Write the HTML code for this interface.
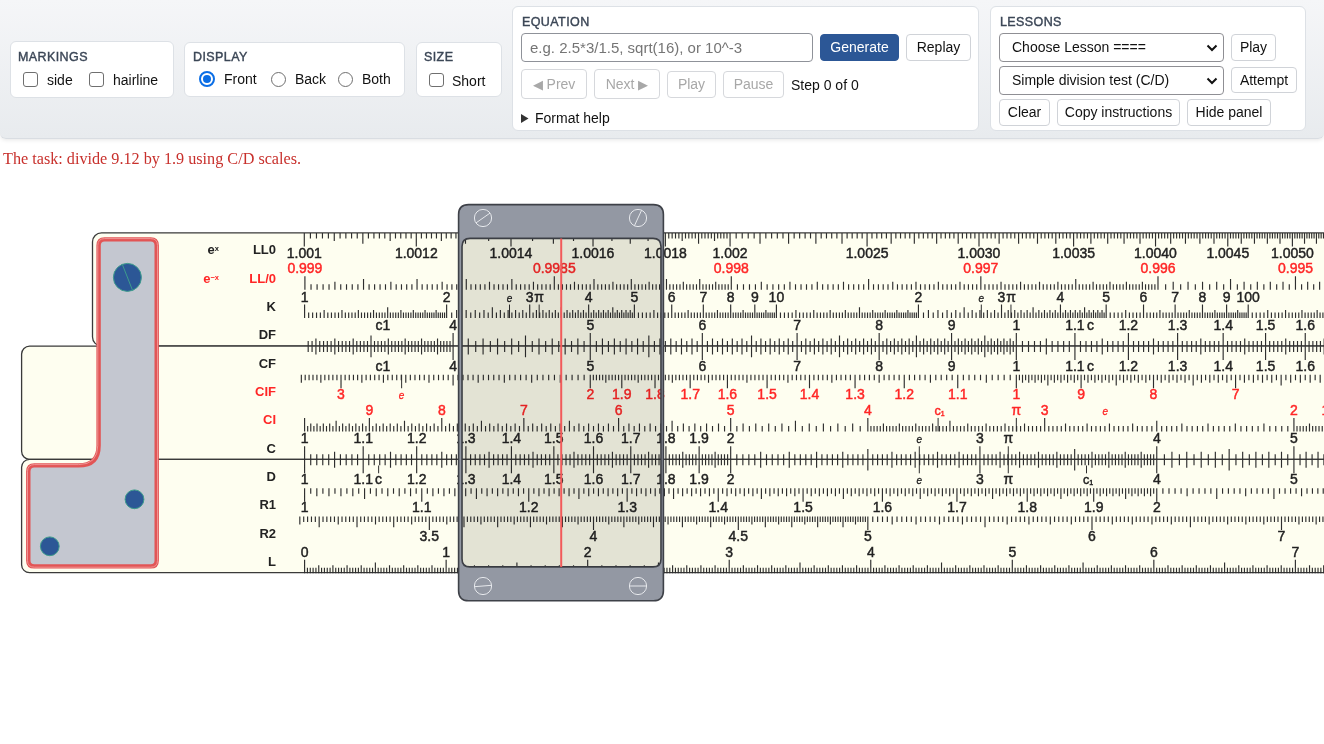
<!DOCTYPE html>
<html><head><meta charset="utf-8"><style>
html,body{margin:0;padding:0;width:1324px;height:744px;overflow:hidden;background:#fff;font-family:"Liberation Sans",sans-serif;}
</style></head><body>
<style>
#panel{position:absolute;left:0;top:0;width:1324px;height:138px;background:linear-gradient(180deg,#f5f6f8 0%,#e8ebee 100%);border-bottom:1px solid #d9dde2;box-shadow:0 1px 4px rgba(0,0,0,0.10);border-radius:0 0 6px 6px}
.box{position:absolute;background:#fff;border:1px solid #dde1e6;border-radius:6px;box-sizing:border-box}
.lab{position:absolute;font-size:12.5px;color:#3b4656;letter-spacing:0.4px;white-space:nowrap;-webkit-text-stroke:0.4px #3b4656}
.txt{position:absolute;font-size:14px;color:#111;white-space:nowrap}
.cb{position:absolute;width:14.5px;height:14.5px;border:1.4px solid #6f6f6f;border-radius:3px;box-sizing:border-box;background:#fff}
.rd{position:absolute;width:15px;height:15px;border:1.4px solid #6f6f6f;border-radius:50%;box-sizing:border-box;background:#fff}
.btn{position:absolute;box-sizing:border-box;border:1px solid #d0d3d8;border-radius:4px;background:#fff;font-size:14px;color:#111;text-align:center;white-space:nowrap}
.dis{color:#a8a8a8;border-color:#d6d8dc}
.sel{position:absolute;box-sizing:border-box;border:1px solid #8f8f94;border-radius:4px;background:#fff;font-size:14px;color:#111;white-space:nowrap}
</style>
<div id="panel">
  <div class="box" style="left:9.5px;top:41px;width:164px;height:57px"></div>
  <div class="lab" style="left:18px;top:50px">MARKINGS</div>
  <div class="cb" style="left:23.2px;top:72px"></div>
  <div class="txt" style="left:47px;top:72px">side</div>
  <div class="cb" style="left:89.3px;top:72px"></div>
  <div class="txt" style="left:113px;top:72px">hairline</div>

  <div class="box" style="left:184px;top:42px;width:221px;height:55px"></div>
  <div class="lab" style="left:193px;top:50px">DISPLAY</div>
  <div class="rd" style="left:198.5px;top:70.8px;width:16.5px;height:16.5px;border:2px solid #0b6ee6"><div style="position:absolute;left:2.25px;top:2.25px;width:8px;height:8px;border-radius:50%;background:#0b6ee6"></div></div>
  <div class="txt" style="left:224px;top:71px">Front</div>
  <div class="rd" style="left:271px;top:71.5px"></div>
  <div class="txt" style="left:295px;top:71px">Back</div>
  <div class="rd" style="left:337.8px;top:71.5px"></div>
  <div class="txt" style="left:362px;top:71px">Both</div>

  <div class="box" style="left:416px;top:42px;width:86px;height:55px"></div>
  <div class="lab" style="left:424px;top:50px">SIZE</div>
  <div class="cb" style="left:429.2px;top:72.5px"></div>
  <div class="txt" style="left:452px;top:73px">Short</div>

  <div class="box" style="left:512px;top:6px;width:467px;height:125px"></div>
  <div class="lab" style="left:522px;top:15px">EQUATION</div>
  <div class="sel" style="left:521px;top:33px;width:292px;height:29px;border-color:#8f9299"><span style="position:absolute;left:8px;top:4.5px;color:#757575;font-size:15px">e.g. 2.5*3/1.5, sqrt(16), or 10^-3</span></div>
  <div class="btn" style="left:820px;top:34px;width:79px;height:27px;background:#2c5796;border-color:#2c5796;color:#fff;line-height:25px">Generate</div>
  <div class="btn" style="left:906px;top:34px;width:65px;height:27px;line-height:25px">Replay</div>
  <div class="btn dis" style="left:521px;top:69px;width:66px;height:30px;line-height:28px"><span style="font-size:13px">&#9664;</span> Prev</div>
  <div class="btn dis" style="left:594px;top:69px;width:66px;height:30px;line-height:28px">Next <span style="font-size:13px">&#9654;</span></div>
  <div class="btn dis" style="left:667px;top:71px;width:49px;height:27px;line-height:25px">Play</div>
  <div class="btn dis" style="left:723px;top:71px;width:61px;height:27px;line-height:25px">Pause</div>
  <div class="txt" style="left:791px;top:77px">Step 0 of 0</div>
  <svg style="position:absolute;left:521px;top:114px" width="8" height="9"><path d="M0 0 L7.5 4.5 L0 9 Z" fill="#333"/></svg>
  <div class="txt" style="left:535px;top:110px">Format help</div>

  <div class="box" style="left:990px;top:6px;width:316px;height:125px"></div>
  <div class="lab" style="left:1000px;top:15px">LESSONS</div>
  <div class="sel" style="left:999px;top:33px;width:225px;height:29px"><span style="position:absolute;left:12px;top:5px">Choose Lesson ====</span><svg style="position:absolute;right:5px;top:10px" width="12" height="8"><path d="M1.5 1.5 L6 6 L10.5 1.5" stroke="#111" stroke-width="2" fill="none"/></svg></div>
  <div class="btn" style="left:1231px;top:34px;width:45px;height:27px;line-height:25px">Play</div>
  <div class="sel" style="left:999px;top:66px;width:225px;height:29px"><span style="position:absolute;left:12px;top:5px">Simple division test (C/D)</span><svg style="position:absolute;right:5px;top:10px" width="12" height="8"><path d="M1.5 1.5 L6 6 L10.5 1.5" stroke="#111" stroke-width="2" fill="none"/></svg></div>
  <div class="btn" style="left:1231px;top:67px;width:66px;height:26px;line-height:24px">Attempt</div>
  <div class="btn" style="left:999px;top:99px;width:51px;height:27px;line-height:25px">Clear</div>
  <div class="btn" style="left:1057px;top:99px;width:123px;height:27px;line-height:25px">Copy instructions</div>
  <div class="btn" style="left:1187px;top:99px;width:84px;height:27px;line-height:25px">Hide panel</div>
</div>

<div style="position:absolute;left:3px;top:150px;font-family:'Liberation Serif',serif;font-size:16.2px;color:#c8302c;white-space:nowrap">The task: divide 9.12 by 1.9 using C/D scales.</div>
<svg width="1324" height="744" viewBox="0 0 1324 744" style="position:absolute;left:0;top:0">
<rect x="92.5" y="232.8" width="1300" height="113.2" rx="9" fill="#fefef0" stroke="#3a3a3a" stroke-width="1.3"/>
<rect x="21.6" y="346.1" width="1400" height="113.2" rx="8" fill="#fefef0" stroke="#3a3a3a" stroke-width="1.3"/>
<rect x="21.6" y="459.3" width="1400" height="113.4" rx="8" fill="#fefef0" stroke="#3a3a3a" stroke-width="1.3"/>
<path d="M304.29 233.00v13.50M416.30 233.00v13.50M511.00 233.00v13.50M593.02 233.00v13.50M665.36 233.00v13.50M730.06 233.00v13.50M362.85 233.00v10.80M465.48 233.00v10.80M553.38 233.00v10.80M630.26 233.00v10.80M698.56 233.00v10.80M334.27 233.00v8.00M390.16 233.00v8.00M441.38 233.00v8.00M488.66 233.00v8.00M532.55 233.00v8.00M573.52 233.00v8.00M611.92 233.00v8.00M648.06 233.00v8.00M682.19 233.00v8.00M714.52 233.00v8.00M310.41 233.00v5.50M316.46 233.00v5.50M322.45 233.00v5.50M328.39 233.00v5.50M340.09 233.00v5.50M345.86 233.00v5.50M351.58 233.00v5.50M357.24 233.00v5.50M368.41 233.00v5.50M373.92 233.00v5.50M379.38 233.00v5.50M384.79 233.00v5.50M395.48 233.00v5.50M400.75 233.00v5.50M405.98 233.00v5.50M411.16 233.00v5.50M421.40 233.00v5.50M426.46 233.00v5.50M431.47 233.00v5.50M436.45 233.00v5.50M446.28 233.00v5.50M451.13 233.00v5.50M455.95 233.00v5.50M460.73 233.00v5.50M470.18 233.00v5.50M474.85 233.00v5.50M479.49 233.00v5.50M484.09 233.00v5.50M493.19 233.00v5.50M497.69 233.00v5.50M502.16 233.00v5.50M506.60 233.00v5.50M515.37 233.00v5.50M519.71 233.00v5.50M524.02 233.00v5.50M528.30 233.00v5.50M536.78 233.00v5.50M540.97 233.00v5.50M545.13 233.00v5.50M549.27 233.00v5.50M557.46 233.00v5.50M561.51 233.00v5.50M565.54 233.00v5.50M569.54 233.00v5.50M577.47 233.00v5.50M581.39 233.00v5.50M585.29 233.00v5.50M589.17 233.00v5.50M596.85 233.00v5.50M600.65 233.00v5.50M604.43 233.00v5.50M608.19 233.00v5.50M615.63 233.00v5.50M619.32 233.00v5.50M622.99 233.00v5.50M626.63 233.00v5.50M633.86 233.00v5.50M637.44 233.00v5.50M641.00 233.00v5.50M644.54 233.00v5.50M651.56 233.00v5.50M655.04 233.00v5.50M658.50 233.00v5.50M661.94 233.00v5.50M668.76 233.00v5.50M672.15 233.00v5.50M675.51 233.00v5.50M678.86 233.00v5.50M685.50 233.00v5.50M688.79 233.00v5.50M692.07 233.00v5.50M695.32 233.00v5.50M701.79 233.00v5.50M704.99 233.00v5.50M708.19 233.00v5.50M711.36 233.00v5.50M717.66 233.00v5.50M720.78 233.00v5.50M723.89 233.00v5.50M726.99 233.00v5.50M867.08 233.00v13.50M979.00 233.00v13.50M760.02 233.00v10.80M788.59 233.00v10.80M815.88 233.00v10.80M842.01 233.00v10.80M891.16 233.00v10.80M914.32 233.00v10.80M936.65 233.00v10.80M958.19 233.00v10.80M736.17 233.00v5.50M742.22 233.00v5.50M748.22 233.00v5.50M754.15 233.00v5.50M765.84 233.00v5.50M771.61 233.00v5.50M777.32 233.00v5.50M782.98 233.00v5.50M794.15 233.00v5.50M799.65 233.00v5.50M805.11 233.00v5.50M810.52 233.00v5.50M821.20 233.00v5.50M826.47 233.00v5.50M831.70 233.00v5.50M836.88 233.00v5.50M847.11 233.00v5.50M852.16 233.00v5.50M857.17 233.00v5.50M862.15 233.00v5.50M871.97 233.00v5.50M876.82 233.00v5.50M881.64 233.00v5.50M886.41 233.00v5.50M895.86 233.00v5.50M900.53 233.00v5.50M905.16 233.00v5.50M909.76 233.00v5.50M918.85 233.00v5.50M923.35 233.00v5.50M927.82 233.00v5.50M932.25 233.00v5.50M941.02 233.00v5.50M945.35 233.00v5.50M949.66 233.00v5.50M953.94 233.00v5.50M962.41 233.00v5.50M966.60 233.00v5.50M970.76 233.00v5.50M974.89 233.00v5.50M1073.60 233.00v13.50M1155.53 233.00v13.50M1227.78 233.00v13.50M1292.39 233.00v13.50M999.12 233.00v10.80M1018.61 233.00v10.80M1037.49 233.00v10.80M1055.81 233.00v10.80M1090.89 233.00v10.80M1107.70 233.00v10.80M1124.06 233.00v10.80M1140.00 233.00v10.80M1170.68 233.00v10.80M1185.46 233.00v10.80M1199.89 233.00v10.80M1213.99 233.00v10.80M1241.26 233.00v10.80M1254.45 233.00v10.80M1267.36 233.00v10.80M1280.00 233.00v10.80M1304.53 233.00v10.80M1316.44 233.00v10.80M1328.11 233.00v10.80M983.07 233.00v5.50M987.13 233.00v5.50M991.15 233.00v5.50M995.15 233.00v5.50M1003.07 233.00v5.50M1006.99 233.00v5.50M1010.89 233.00v5.50M1014.76 233.00v5.50M1022.43 233.00v5.50M1026.23 233.00v5.50M1030.01 233.00v5.50M1033.76 233.00v5.50M1041.20 233.00v5.50M1044.89 233.00v5.50M1048.55 233.00v5.50M1052.19 233.00v5.50M1059.41 233.00v5.50M1062.99 233.00v5.50M1066.55 233.00v5.50M1070.08 233.00v5.50M1077.10 233.00v5.50M1080.57 233.00v5.50M1084.03 233.00v5.50M1087.47 233.00v5.50M1094.29 233.00v5.50M1097.67 233.00v5.50M1101.03 233.00v5.50M1104.37 233.00v5.50M1111.00 233.00v5.50M1114.29 233.00v5.50M1117.57 233.00v5.50M1120.82 233.00v5.50M1127.28 233.00v5.50M1130.48 233.00v5.50M1133.67 233.00v5.50M1136.84 233.00v5.50M1143.13 233.00v5.50M1146.26 233.00v5.50M1149.36 233.00v5.50M1152.45 233.00v5.50M1158.59 233.00v5.50M1161.63 233.00v5.50M1164.66 233.00v5.50M1167.68 233.00v5.50M1173.66 233.00v5.50M1176.63 233.00v5.50M1179.59 233.00v5.50M1182.53 233.00v5.50M1188.37 233.00v5.50M1191.27 233.00v5.50M1194.16 233.00v5.50M1197.03 233.00v5.50M1202.74 233.00v5.50M1205.57 233.00v5.50M1208.39 233.00v5.50M1211.20 233.00v5.50M1216.77 233.00v5.50M1219.54 233.00v5.50M1222.30 233.00v5.50M1225.04 233.00v5.50M1230.50 233.00v5.50M1233.20 233.00v5.50M1235.90 233.00v5.50M1238.58 233.00v5.50M1243.92 233.00v5.50M1246.57 233.00v5.50M1249.20 233.00v5.50M1251.83 233.00v5.50M1257.05 233.00v5.50M1259.64 233.00v5.50M1262.22 233.00v5.50M1264.80 233.00v5.50M1269.91 233.00v5.50M1272.45 233.00v5.50M1274.97 233.00v5.50M1277.49 233.00v5.50M1282.50 233.00v5.50M1284.99 233.00v5.50M1287.46 233.00v5.50M1289.93 233.00v5.50M1294.84 233.00v5.50M1297.27 233.00v5.50M1299.70 233.00v5.50M1302.12 233.00v5.50M1306.93 233.00v5.50M1309.32 233.00v5.50M1311.70 233.00v5.50M1314.07 233.00v5.50M1318.79 233.00v5.50M1321.13 233.00v5.50M1323.47 233.00v5.50M1325.80 233.00v5.50" stroke="#2e2e2e" stroke-width="1.15" fill="none"/>
<path d="M731.29 289.70v-13.50M554.30 289.70v-13.50M304.91 289.70v-13.50M699.73 289.70v-10.80M666.47 289.70v-10.80M631.30 289.70v-10.80M594.00 289.70v-10.80M511.86 289.70v-10.80M466.28 289.70v-10.80M417.04 289.70v-10.80M363.53 289.70v-10.80M715.71 289.70v-8.00M683.32 289.70v-8.00M649.13 289.70v-8.00M612.93 289.70v-8.00M574.47 289.70v-8.00M533.45 289.70v-8.00M489.49 289.70v-8.00M442.15 289.70v-8.00M390.87 289.70v-8.00M334.91 289.70v-8.00M728.21 289.70v-5.50M725.11 289.70v-5.50M721.99 289.70v-5.50M718.86 289.70v-5.50M712.55 289.70v-5.50M709.37 289.70v-5.50M706.18 289.70v-5.50M702.96 289.70v-5.50M696.49 289.70v-5.50M693.22 289.70v-5.50M689.94 289.70v-5.50M686.64 289.70v-5.50M679.99 289.70v-5.50M676.64 289.70v-5.50M673.26 289.70v-5.50M669.87 289.70v-5.50M663.04 289.70v-5.50M659.59 289.70v-5.50M656.13 289.70v-5.50M652.64 289.70v-5.50M645.61 289.70v-5.50M642.06 289.70v-5.50M638.50 289.70v-5.50M634.91 289.70v-5.50M627.67 289.70v-5.50M624.02 289.70v-5.50M620.35 289.70v-5.50M616.65 289.70v-5.50M609.19 289.70v-5.50M605.43 289.70v-5.50M601.65 289.70v-5.50M597.84 289.70v-5.50M590.15 289.70v-5.50M586.27 289.70v-5.50M582.36 289.70v-5.50M578.43 289.70v-5.50M570.49 289.70v-5.50M566.48 289.70v-5.50M562.45 289.70v-5.50M558.39 289.70v-5.50M550.19 289.70v-5.50M546.04 289.70v-5.50M541.87 289.70v-5.50M537.67 289.70v-5.50M529.19 289.70v-5.50M524.90 289.70v-5.50M520.59 289.70v-5.50M516.24 289.70v-5.50M507.45 289.70v-5.50M503.01 289.70v-5.50M498.54 289.70v-5.50M494.03 289.70v-5.50M484.92 289.70v-5.50M480.31 289.70v-5.50M475.67 289.70v-5.50M470.99 289.70v-5.50M461.53 289.70v-5.50M456.74 289.70v-5.50M451.91 289.70v-5.50M447.05 289.70v-5.50M437.21 289.70v-5.50M432.23 289.70v-5.50M427.21 289.70v-5.50M422.15 289.70v-5.50M411.90 289.70v-5.50M406.70 289.70v-5.50M401.47 289.70v-5.50M396.19 289.70v-5.50M385.49 289.70v-5.50M380.07 289.70v-5.50M374.61 289.70v-5.50M369.09 289.70v-5.50M357.91 289.70v-5.50M352.24 289.70v-5.50M346.52 289.70v-5.50M340.74 289.70v-5.50M329.03 289.70v-5.50M323.09 289.70v-5.50M317.09 289.70v-5.50M311.03 289.70v-5.50M1157.99 289.70v-13.50M980.84 289.70v-13.50M1075.75 289.70v-10.80M868.61 289.70v-10.80M1142.39 289.70v-8.00M1126.40 289.70v-8.00M1109.97 289.70v-8.00M1093.10 289.70v-8.00M1057.90 289.70v-8.00M1039.52 289.70v-8.00M1020.57 289.70v-8.00M1001.03 289.70v-8.00M959.97 289.70v-8.00M938.37 289.70v-8.00M915.98 289.70v-8.00M892.75 289.70v-8.00M843.49 289.70v-8.00M817.30 289.70v-8.00M789.94 289.70v-8.00M761.32 289.70v-8.00M1154.90 289.70v-5.50M1151.80 289.70v-5.50M1148.68 289.70v-5.50M1145.54 289.70v-5.50M1139.23 289.70v-5.50M1136.04 289.70v-5.50M1132.84 289.70v-5.50M1129.63 289.70v-5.50M1123.15 289.70v-5.50M1119.88 289.70v-5.50M1116.59 289.70v-5.50M1113.29 289.70v-5.50M1106.63 289.70v-5.50M1103.28 289.70v-5.50M1099.90 289.70v-5.50M1096.51 289.70v-5.50M1089.67 289.70v-5.50M1086.22 289.70v-5.50M1082.75 289.70v-5.50M1079.26 289.70v-5.50M1072.22 289.70v-5.50M1068.67 289.70v-5.50M1065.10 289.70v-5.50M1061.51 289.70v-5.50M1054.27 289.70v-5.50M1050.61 289.70v-5.50M1046.94 289.70v-5.50M1043.24 289.70v-5.50M1035.78 289.70v-5.50M1032.01 289.70v-5.50M1028.22 289.70v-5.50M1024.41 289.70v-5.50M1016.71 289.70v-5.50M1012.83 289.70v-5.50M1008.92 289.70v-5.50M1004.99 289.70v-5.50M997.04 289.70v-5.50M993.03 289.70v-5.50M988.99 289.70v-5.50M984.93 289.70v-5.50M976.72 289.70v-5.50M972.58 289.70v-5.50M968.40 289.70v-5.50M964.20 289.70v-5.50M955.71 289.70v-5.50M951.42 289.70v-5.50M947.10 289.70v-5.50M942.75 289.70v-5.50M933.96 289.70v-5.50M929.51 289.70v-5.50M925.04 289.70v-5.50M920.53 289.70v-5.50M911.41 289.70v-5.50M906.80 289.70v-5.50M902.15 289.70v-5.50M897.47 289.70v-5.50M888.00 289.70v-5.50M883.21 289.70v-5.50M878.38 289.70v-5.50M873.52 289.70v-5.50M863.67 289.70v-5.50M858.69 289.70v-5.50M853.66 289.70v-5.50M848.60 289.70v-5.50M838.34 289.70v-5.50M833.15 289.70v-5.50M827.91 289.70v-5.50M822.63 289.70v-5.50M811.92 289.70v-5.50M806.50 289.70v-5.50M801.03 289.70v-5.50M795.51 289.70v-5.50M784.32 289.70v-5.50M778.65 289.70v-5.50M772.93 289.70v-5.50M767.15 289.70v-5.50M755.43 289.70v-5.50M749.48 289.70v-5.50M743.48 289.70v-5.50M737.42 289.70v-5.50M1295.46 289.70v-13.50M1230.54 289.70v-10.80M1319.63 289.70v-8.00M1307.67 289.70v-8.00M1283.01 289.70v-8.00M1270.31 289.70v-8.00M1257.33 289.70v-8.00M1244.08 289.70v-8.00M1216.70 289.70v-8.00M1202.54 289.70v-8.00M1188.04 289.70v-8.00M1173.20 289.70v-8.00M1325.53 289.70v-5.50M1313.68 289.70v-5.50M1301.59 289.70v-5.50M1289.27 289.70v-5.50M1276.69 289.70v-5.50M1263.85 289.70v-5.50M1250.74 289.70v-5.50M1237.35 289.70v-5.50M1223.66 289.70v-5.50M1209.66 289.70v-5.50M1195.33 289.70v-5.50M1180.66 289.70v-5.50M1165.64 289.70v-5.50" stroke="#2e2e2e" stroke-width="1.15" fill="none"/>
<path d="M304.60 318.05v-13.50M446.63 318.05v-13.50M387.68 318.05v-10.80M324.13 318.05v-8.00M341.96 318.05v-8.00M358.36 318.05v-8.00M373.54 318.05v-8.00M400.90 318.05v-8.00M413.33 318.05v-8.00M425.04 318.05v-8.00M436.12 318.05v-8.00M308.66 318.05v-5.50M312.64 318.05v-5.50M316.54 318.05v-5.50M320.37 318.05v-5.50M327.82 318.05v-5.50M331.45 318.05v-5.50M335.01 318.05v-5.50M338.51 318.05v-5.50M345.34 318.05v-5.50M348.68 318.05v-5.50M351.95 318.05v-5.50M355.18 318.05v-5.50M361.49 318.05v-5.50M364.57 318.05v-5.50M367.60 318.05v-5.50M370.59 318.05v-5.50M376.45 318.05v-5.50M379.32 318.05v-5.50M382.14 318.05v-5.50M384.93 318.05v-5.50M390.39 318.05v-5.50M393.07 318.05v-5.50M395.72 318.05v-5.50M398.33 318.05v-5.50M403.45 318.05v-5.50M405.96 318.05v-5.50M408.45 318.05v-5.50M410.90 318.05v-5.50M415.72 318.05v-5.50M418.09 318.05v-5.50M420.43 318.05v-5.50M422.75 318.05v-5.50M427.30 318.05v-5.50M429.54 318.05v-5.50M431.76 318.05v-5.50M433.95 318.05v-5.50M438.26 318.05v-5.50M440.38 318.05v-5.50M442.49 318.05v-5.50M444.57 318.05v-5.50M529.71 318.05v-13.50M588.65 318.05v-13.50M634.37 318.05v-13.50M492.35 318.05v-10.80M561.29 318.05v-10.80M612.79 318.05v-10.80M456.62 318.05v-8.00M466.16 318.05v-8.00M475.26 318.05v-8.00M483.98 318.05v-8.00M500.38 318.05v-8.00M508.12 318.05v-8.00M515.57 318.05v-8.00M522.76 318.05v-8.00M536.42 318.05v-8.00M542.93 318.05v-8.00M549.23 318.05v-8.00M555.35 318.05v-8.00M567.06 318.05v-8.00M572.68 318.05v-8.00M578.14 318.05v-8.00M583.46 318.05v-8.00M593.71 318.05v-8.00M598.65 318.05v-8.00M603.47 318.05v-8.00M608.18 318.05v-8.00M617.29 318.05v-8.00M621.70 318.05v-8.00M626.01 318.05v-8.00M630.23 318.05v-8.00M451.69 318.05v-5.50M461.44 318.05v-5.50M470.76 318.05v-5.50M479.67 318.05v-5.50M488.21 318.05v-5.50M496.41 318.05v-5.50M504.29 318.05v-5.50M511.88 318.05v-5.50M519.20 318.05v-5.50M526.26 318.05v-5.50M533.09 318.05v-5.50M539.70 318.05v-5.50M546.11 318.05v-5.50M552.32 318.05v-5.50M558.34 318.05v-5.50M564.20 318.05v-5.50M569.89 318.05v-5.50M575.43 318.05v-5.50M580.82 318.05v-5.50M586.07 318.05v-5.50M591.20 318.05v-5.50M596.20 318.05v-5.50M601.07 318.05v-5.50M605.84 318.05v-5.50M610.50 318.05v-5.50M615.05 318.05v-5.50M619.50 318.05v-5.50M623.86 318.05v-5.50M628.13 318.05v-5.50M632.31 318.05v-5.50M671.73 318.05v-13.50M703.32 318.05v-13.50M730.68 318.05v-13.50M754.81 318.05v-13.50M776.40 318.05v-13.50M653.90 318.05v-8.00M688.13 318.05v-8.00M717.45 318.05v-8.00M743.10 318.05v-8.00M765.89 318.05v-8.00M638.43 318.05v-5.50M642.41 318.05v-5.50M646.31 318.05v-5.50M650.14 318.05v-5.50M657.60 318.05v-5.50M661.22 318.05v-5.50M664.79 318.05v-5.50M668.29 318.05v-5.50M675.12 318.05v-5.50M678.45 318.05v-5.50M681.73 318.05v-5.50M684.96 318.05v-5.50M691.26 318.05v-5.50M694.34 318.05v-5.50M697.38 318.05v-5.50M700.37 318.05v-5.50M706.22 318.05v-5.50M709.09 318.05v-5.50M711.92 318.05v-5.50M714.70 318.05v-5.50M720.17 318.05v-5.50M722.85 318.05v-5.50M725.49 318.05v-5.50M728.10 318.05v-5.50M733.22 318.05v-5.50M735.74 318.05v-5.50M738.22 318.05v-5.50M740.67 318.05v-5.50M745.50 318.05v-5.50M747.87 318.05v-5.50M750.21 318.05v-5.50M752.52 318.05v-5.50M757.08 318.05v-5.50M759.32 318.05v-5.50M761.53 318.05v-5.50M763.72 318.05v-5.50M768.04 318.05v-5.50M770.16 318.05v-5.50M772.26 318.05v-5.50M774.34 318.05v-5.50M918.43 318.05v-13.50M859.48 318.05v-10.80M795.93 318.05v-8.00M813.76 318.05v-8.00M830.16 318.05v-8.00M845.34 318.05v-8.00M872.70 318.05v-8.00M885.13 318.05v-8.00M896.84 318.05v-8.00M907.92 318.05v-8.00M780.46 318.05v-5.50M784.44 318.05v-5.50M788.34 318.05v-5.50M792.17 318.05v-5.50M799.62 318.05v-5.50M803.25 318.05v-5.50M806.81 318.05v-5.50M810.31 318.05v-5.50M817.14 318.05v-5.50M820.48 318.05v-5.50M823.75 318.05v-5.50M826.98 318.05v-5.50M833.29 318.05v-5.50M836.37 318.05v-5.50M839.40 318.05v-5.50M842.39 318.05v-5.50M848.25 318.05v-5.50M851.12 318.05v-5.50M853.94 318.05v-5.50M856.73 318.05v-5.50M862.19 318.05v-5.50M864.87 318.05v-5.50M867.52 318.05v-5.50M870.13 318.05v-5.50M875.25 318.05v-5.50M877.76 318.05v-5.50M880.25 318.05v-5.50M882.70 318.05v-5.50M887.52 318.05v-5.50M889.89 318.05v-5.50M892.23 318.05v-5.50M894.55 318.05v-5.50M899.10 318.05v-5.50M901.34 318.05v-5.50M903.56 318.05v-5.50M905.75 318.05v-5.50M910.06 318.05v-5.50M912.18 318.05v-5.50M914.29 318.05v-5.50M916.37 318.05v-5.50M1001.51 318.05v-13.50M1060.45 318.05v-13.50M1106.17 318.05v-13.50M964.15 318.05v-10.80M1033.09 318.05v-10.80M1084.59 318.05v-10.80M928.42 318.05v-8.00M937.96 318.05v-8.00M947.06 318.05v-8.00M955.78 318.05v-8.00M972.18 318.05v-8.00M979.92 318.05v-8.00M987.37 318.05v-8.00M994.56 318.05v-8.00M1008.22 318.05v-8.00M1014.73 318.05v-8.00M1021.03 318.05v-8.00M1027.15 318.05v-8.00M1038.86 318.05v-8.00M1044.48 318.05v-8.00M1049.94 318.05v-8.00M1055.26 318.05v-8.00M1065.51 318.05v-8.00M1070.45 318.05v-8.00M1075.27 318.05v-8.00M1079.98 318.05v-8.00M1089.09 318.05v-8.00M1093.50 318.05v-8.00M1097.81 318.05v-8.00M1102.03 318.05v-8.00M923.49 318.05v-5.50M933.24 318.05v-5.50M942.56 318.05v-5.50M951.47 318.05v-5.50M960.01 318.05v-5.50M968.21 318.05v-5.50M976.09 318.05v-5.50M983.68 318.05v-5.50M991.00 318.05v-5.50M998.06 318.05v-5.50M1004.89 318.05v-5.50M1011.50 318.05v-5.50M1017.91 318.05v-5.50M1024.12 318.05v-5.50M1030.14 318.05v-5.50M1036.00 318.05v-5.50M1041.69 318.05v-5.50M1047.23 318.05v-5.50M1052.62 318.05v-5.50M1057.87 318.05v-5.50M1063.00 318.05v-5.50M1068.00 318.05v-5.50M1072.87 318.05v-5.50M1077.64 318.05v-5.50M1082.30 318.05v-5.50M1086.85 318.05v-5.50M1091.30 318.05v-5.50M1095.66 318.05v-5.50M1099.93 318.05v-5.50M1104.11 318.05v-5.50M1143.53 318.05v-13.50M1175.12 318.05v-13.50M1202.48 318.05v-13.50M1226.61 318.05v-13.50M1248.20 318.05v-13.50M1125.70 318.05v-8.00M1159.93 318.05v-8.00M1189.25 318.05v-8.00M1214.90 318.05v-8.00M1237.69 318.05v-8.00M1110.23 318.05v-5.50M1114.21 318.05v-5.50M1118.11 318.05v-5.50M1121.94 318.05v-5.50M1129.40 318.05v-5.50M1133.02 318.05v-5.50M1136.59 318.05v-5.50M1140.09 318.05v-5.50M1146.92 318.05v-5.50M1150.25 318.05v-5.50M1153.53 318.05v-5.50M1156.76 318.05v-5.50M1163.06 318.05v-5.50M1166.14 318.05v-5.50M1169.18 318.05v-5.50M1172.17 318.05v-5.50M1178.02 318.05v-5.50M1180.89 318.05v-5.50M1183.72 318.05v-5.50M1186.50 318.05v-5.50M1191.97 318.05v-5.50M1194.65 318.05v-5.50M1197.29 318.05v-5.50M1199.90 318.05v-5.50M1205.02 318.05v-5.50M1207.54 318.05v-5.50M1210.02 318.05v-5.50M1212.47 318.05v-5.50M1217.30 318.05v-5.50M1219.67 318.05v-5.50M1222.01 318.05v-5.50M1224.32 318.05v-5.50M1228.88 318.05v-5.50M1231.12 318.05v-5.50M1233.33 318.05v-5.50M1235.52 318.05v-5.50M1239.84 318.05v-5.50M1241.96 318.05v-5.50M1244.06 318.05v-5.50M1246.14 318.05v-5.50M1267.73 318.05v-8.00M1285.56 318.05v-8.00M1301.96 318.05v-8.00M1317.14 318.05v-8.00M1252.26 318.05v-5.50M1256.24 318.05v-5.50M1260.14 318.05v-5.50M1263.97 318.05v-5.50M1271.42 318.05v-5.50M1275.05 318.05v-5.50M1278.61 318.05v-5.50M1282.11 318.05v-5.50M1288.94 318.05v-5.50M1292.28 318.05v-5.50M1295.55 318.05v-5.50M1298.78 318.05v-5.50M1305.09 318.05v-5.50M1308.17 318.05v-5.50M1311.20 318.05v-5.50M1314.19 318.05v-5.50M1320.05 318.05v-5.50M1322.92 318.05v-5.50M1325.74 318.05v-5.50M1328.53 318.05v-5.50" stroke="#2e2e2e" stroke-width="1.15" fill="none"/>
<path d="M453.09 346.40v-13.50M371.01 346.40v-10.80M315.92 346.40v-8.00M334.84 346.40v-8.00M353.19 346.40v-8.00M388.32 346.40v-8.00M405.17 346.40v-8.00M421.56 346.40v-8.00M437.53 346.40v-8.00M308.19 346.40v-5.50M312.07 346.40v-5.50M319.75 346.40v-5.50M323.56 346.40v-5.50M327.34 346.40v-5.50M331.10 346.40v-5.50M338.55 346.40v-5.50M342.24 346.40v-5.50M345.91 346.40v-5.50M349.56 346.40v-5.50M356.79 346.40v-5.50M360.38 346.40v-5.50M363.94 346.40v-5.50M367.49 346.40v-5.50M374.51 346.40v-5.50M377.99 346.40v-5.50M381.46 346.40v-5.50M384.90 346.40v-5.50M391.73 346.40v-5.50M395.12 346.40v-5.50M398.49 346.40v-5.50M401.84 346.40v-5.50M408.48 346.40v-5.50M411.78 346.40v-5.50M415.05 346.40v-5.50M418.32 346.40v-5.50M424.79 346.40v-5.50M428.00 346.40v-5.50M431.19 346.40v-5.50M434.37 346.40v-5.50M440.67 346.40v-5.50M443.80 346.40v-5.50M446.91 346.40v-5.50M450.01 346.40v-5.50M590.26 346.40v-13.50M702.33 346.40v-13.50M797.09 346.40v-13.50M879.17 346.40v-13.50M951.57 346.40v-13.50M1016.33 346.40v-13.50M525.49 346.40v-10.80M648.84 346.40v-10.80M751.53 346.40v-10.80M839.50 346.40v-10.80M916.43 346.40v-10.80M984.80 346.40v-10.80M468.27 346.40v-8.00M483.08 346.40v-8.00M497.55 346.40v-8.00M511.68 346.40v-8.00M539.00 346.40v-8.00M552.22 346.40v-8.00M565.16 346.40v-8.00M577.84 346.40v-8.00M602.43 346.40v-8.00M614.37 346.40v-8.00M626.07 346.40v-8.00M637.56 346.40v-8.00M659.92 346.40v-8.00M670.80 346.40v-8.00M681.49 346.40v-8.00M692.00 346.40v-8.00M712.49 346.40v-8.00M722.49 346.40v-8.00M732.32 346.40v-8.00M742.00 346.40v-8.00M760.92 346.40v-8.00M770.16 346.40v-8.00M779.27 346.40v-8.00M788.24 346.40v-8.00M805.81 346.40v-8.00M814.40 346.40v-8.00M822.88 346.40v-8.00M831.24 346.40v-8.00M847.64 346.40v-8.00M855.67 346.40v-8.00M863.60 346.40v-8.00M871.44 346.40v-8.00M886.80 346.40v-8.00M894.35 346.40v-8.00M901.80 346.40v-8.00M909.16 346.40v-8.00M923.62 346.40v-8.00M930.73 346.40v-8.00M937.75 346.40v-8.00M944.70 346.40v-8.00M958.36 346.40v-8.00M965.08 346.40v-8.00M971.72 346.40v-8.00M978.30 346.40v-8.00M991.24 346.40v-8.00M997.61 346.40v-8.00M1003.92 346.40v-8.00M1010.16 346.40v-8.00M460.73 346.40v-5.50M475.72 346.40v-5.50M490.36 346.40v-5.50M504.65 346.40v-5.50M518.62 346.40v-5.50M532.28 346.40v-5.50M545.65 346.40v-5.50M558.73 346.40v-5.50M571.53 346.40v-5.50M584.08 346.40v-5.50M596.37 346.40v-5.50M608.43 346.40v-5.50M620.25 346.40v-5.50M631.85 346.40v-5.50M643.23 346.40v-5.50M654.41 346.40v-5.50M665.38 346.40v-5.50M676.17 346.40v-5.50M686.77 346.40v-5.50M697.19 346.40v-5.50M707.43 346.40v-5.50M717.51 346.40v-5.50M727.42 346.40v-5.50M737.18 346.40v-5.50M746.78 346.40v-5.50M756.24 346.40v-5.50M765.56 346.40v-5.50M774.73 346.40v-5.50M783.77 346.40v-5.50M792.68 346.40v-5.50M801.46 346.40v-5.50M810.12 346.40v-5.50M818.66 346.40v-5.50M827.08 346.40v-5.50M835.38 346.40v-5.50M843.58 346.40v-5.50M851.67 346.40v-5.50M859.65 346.40v-5.50M867.53 346.40v-5.50M875.31 346.40v-5.50M883.00 346.40v-5.50M890.59 346.40v-5.50M898.08 346.40v-5.50M905.49 346.40v-5.50M912.81 346.40v-5.50M920.04 346.40v-5.50M927.19 346.40v-5.50M934.25 346.40v-5.50M941.24 346.40v-5.50M948.14 346.40v-5.50M954.97 346.40v-5.50M961.73 346.40v-5.50M968.41 346.40v-5.50M975.02 346.40v-5.50M981.56 346.40v-5.50M988.03 346.40v-5.50M994.43 346.40v-5.50M1000.77 346.40v-5.50M1007.04 346.40v-5.50M1013.25 346.40v-5.50M1016.33 346.40v-13.50M1074.92 346.40v-13.50M1128.41 346.40v-13.50M1177.61 346.40v-13.50M1223.16 346.40v-13.50M1265.57 346.40v-13.50M1305.25 346.40v-13.50M1046.33 346.40v-8.00M1102.25 346.40v-8.00M1153.50 346.40v-8.00M1200.81 346.40v-8.00M1244.73 346.40v-8.00M1285.73 346.40v-8.00M1324.16 346.40v-8.00M1022.45 346.40v-5.50M1028.51 346.40v-5.50M1034.50 346.40v-5.50M1040.44 346.40v-5.50M1052.15 346.40v-5.50M1057.92 346.40v-5.50M1063.64 346.40v-5.50M1069.31 346.40v-5.50M1080.48 346.40v-5.50M1086.00 346.40v-5.50M1091.46 346.40v-5.50M1096.88 346.40v-5.50M1107.57 346.40v-5.50M1112.84 346.40v-5.50M1118.08 346.40v-5.50M1123.26 346.40v-5.50M1133.51 346.40v-5.50M1138.57 346.40v-5.50M1143.59 346.40v-5.50M1148.56 346.40v-5.50M1158.40 346.40v-5.50M1163.26 346.40v-5.50M1168.08 346.40v-5.50M1172.86 346.40v-5.50M1182.32 346.40v-5.50M1186.99 346.40v-5.50M1191.63 346.40v-5.50M1196.24 346.40v-5.50M1205.35 346.40v-5.50M1209.85 346.40v-5.50M1214.32 346.40v-5.50M1218.76 346.40v-5.50M1227.54 346.40v-5.50M1231.88 346.40v-5.50M1236.20 346.40v-5.50M1240.48 346.40v-5.50M1248.96 346.40v-5.50M1253.16 346.40v-5.50M1257.32 346.40v-5.50M1261.46 346.40v-5.50M1269.66 346.40v-5.50M1273.72 346.40v-5.50M1277.75 346.40v-5.50M1281.75 346.40v-5.50M1289.68 346.40v-5.50M1293.61 346.40v-5.50M1297.51 346.40v-5.50M1301.39 346.40v-5.50M1309.08 346.40v-5.50M1312.88 346.40v-5.50M1316.66 346.40v-5.50M1320.42 346.40v-5.50M1327.88 346.40v-5.50" stroke="#2e2e2e" stroke-width="1.15" fill="none"/>
<path d="M453.09 346.40v13.50M371.01 346.40v10.80M315.92 346.40v8.00M334.84 346.40v8.00M353.19 346.40v8.00M388.32 346.40v8.00M405.17 346.40v8.00M421.56 346.40v8.00M437.53 346.40v8.00M308.19 346.40v5.50M312.07 346.40v5.50M319.75 346.40v5.50M323.56 346.40v5.50M327.34 346.40v5.50M331.10 346.40v5.50M338.55 346.40v5.50M342.24 346.40v5.50M345.91 346.40v5.50M349.56 346.40v5.50M356.79 346.40v5.50M360.38 346.40v5.50M363.94 346.40v5.50M367.49 346.40v5.50M374.51 346.40v5.50M377.99 346.40v5.50M381.46 346.40v5.50M384.90 346.40v5.50M391.73 346.40v5.50M395.12 346.40v5.50M398.49 346.40v5.50M401.84 346.40v5.50M408.48 346.40v5.50M411.78 346.40v5.50M415.05 346.40v5.50M418.32 346.40v5.50M424.79 346.40v5.50M428.00 346.40v5.50M431.19 346.40v5.50M434.37 346.40v5.50M440.67 346.40v5.50M443.80 346.40v5.50M446.91 346.40v5.50M450.01 346.40v5.50M590.26 346.40v13.50M702.33 346.40v13.50M797.09 346.40v13.50M879.17 346.40v13.50M951.57 346.40v13.50M1016.33 346.40v13.50M525.49 346.40v10.80M648.84 346.40v10.80M751.53 346.40v10.80M839.50 346.40v10.80M916.43 346.40v10.80M984.80 346.40v10.80M468.27 346.40v8.00M483.08 346.40v8.00M497.55 346.40v8.00M511.68 346.40v8.00M539.00 346.40v8.00M552.22 346.40v8.00M565.16 346.40v8.00M577.84 346.40v8.00M602.43 346.40v8.00M614.37 346.40v8.00M626.07 346.40v8.00M637.56 346.40v8.00M659.92 346.40v8.00M670.80 346.40v8.00M681.49 346.40v8.00M692.00 346.40v8.00M712.49 346.40v8.00M722.49 346.40v8.00M732.32 346.40v8.00M742.00 346.40v8.00M760.92 346.40v8.00M770.16 346.40v8.00M779.27 346.40v8.00M788.24 346.40v8.00M805.81 346.40v8.00M814.40 346.40v8.00M822.88 346.40v8.00M831.24 346.40v8.00M847.64 346.40v8.00M855.67 346.40v8.00M863.60 346.40v8.00M871.44 346.40v8.00M886.80 346.40v8.00M894.35 346.40v8.00M901.80 346.40v8.00M909.16 346.40v8.00M923.62 346.40v8.00M930.73 346.40v8.00M937.75 346.40v8.00M944.70 346.40v8.00M958.36 346.40v8.00M965.08 346.40v8.00M971.72 346.40v8.00M978.30 346.40v8.00M991.24 346.40v8.00M997.61 346.40v8.00M1003.92 346.40v8.00M1010.16 346.40v8.00M460.73 346.40v5.50M475.72 346.40v5.50M490.36 346.40v5.50M504.65 346.40v5.50M518.62 346.40v5.50M532.28 346.40v5.50M545.65 346.40v5.50M558.73 346.40v5.50M571.53 346.40v5.50M584.08 346.40v5.50M596.37 346.40v5.50M608.43 346.40v5.50M620.25 346.40v5.50M631.85 346.40v5.50M643.23 346.40v5.50M654.41 346.40v5.50M665.38 346.40v5.50M676.17 346.40v5.50M686.77 346.40v5.50M697.19 346.40v5.50M707.43 346.40v5.50M717.51 346.40v5.50M727.42 346.40v5.50M737.18 346.40v5.50M746.78 346.40v5.50M756.24 346.40v5.50M765.56 346.40v5.50M774.73 346.40v5.50M783.77 346.40v5.50M792.68 346.40v5.50M801.46 346.40v5.50M810.12 346.40v5.50M818.66 346.40v5.50M827.08 346.40v5.50M835.38 346.40v5.50M843.58 346.40v5.50M851.67 346.40v5.50M859.65 346.40v5.50M867.53 346.40v5.50M875.31 346.40v5.50M883.00 346.40v5.50M890.59 346.40v5.50M898.08 346.40v5.50M905.49 346.40v5.50M912.81 346.40v5.50M920.04 346.40v5.50M927.19 346.40v5.50M934.25 346.40v5.50M941.24 346.40v5.50M948.14 346.40v5.50M954.97 346.40v5.50M961.73 346.40v5.50M968.41 346.40v5.50M975.02 346.40v5.50M981.56 346.40v5.50M988.03 346.40v5.50M994.43 346.40v5.50M1000.77 346.40v5.50M1007.04 346.40v5.50M1013.25 346.40v5.50M1016.33 346.40v13.50M1074.92 346.40v13.50M1128.41 346.40v13.50M1177.61 346.40v13.50M1223.16 346.40v13.50M1265.57 346.40v13.50M1305.25 346.40v13.50M1046.33 346.40v8.00M1102.25 346.40v8.00M1153.50 346.40v8.00M1200.81 346.40v8.00M1244.73 346.40v8.00M1285.73 346.40v8.00M1324.16 346.40v8.00M1022.45 346.40v5.50M1028.51 346.40v5.50M1034.50 346.40v5.50M1040.44 346.40v5.50M1052.15 346.40v5.50M1057.92 346.40v5.50M1063.64 346.40v5.50M1069.31 346.40v5.50M1080.48 346.40v5.50M1086.00 346.40v5.50M1091.46 346.40v5.50M1096.88 346.40v5.50M1107.57 346.40v5.50M1112.84 346.40v5.50M1118.08 346.40v5.50M1123.26 346.40v5.50M1133.51 346.40v5.50M1138.57 346.40v5.50M1143.59 346.40v5.50M1148.56 346.40v5.50M1158.40 346.40v5.50M1163.26 346.40v5.50M1168.08 346.40v5.50M1172.86 346.40v5.50M1182.32 346.40v5.50M1186.99 346.40v5.50M1191.63 346.40v5.50M1196.24 346.40v5.50M1205.35 346.40v5.50M1209.85 346.40v5.50M1214.32 346.40v5.50M1218.76 346.40v5.50M1227.54 346.40v5.50M1231.88 346.40v5.50M1236.20 346.40v5.50M1240.48 346.40v5.50M1248.96 346.40v5.50M1253.16 346.40v5.50M1257.32 346.40v5.50M1261.46 346.40v5.50M1269.66 346.40v5.50M1273.72 346.40v5.50M1277.75 346.40v5.50M1281.75 346.40v5.50M1289.68 346.40v5.50M1293.61 346.40v5.50M1297.51 346.40v5.50M1301.39 346.40v5.50M1309.08 346.40v5.50M1312.88 346.40v5.50M1316.66 346.40v5.50M1320.42 346.40v5.50M1327.88 346.40v5.50" stroke="#2e2e2e" stroke-width="1.15" fill="none"/>
<path d="M1016.33 374.75v13.50M590.26 374.75v13.50M957.75 374.75v13.50M904.26 374.75v13.50M855.06 374.75v13.50M809.50 374.75v13.50M767.09 374.75v13.50M727.42 374.75v13.50M690.16 374.75v13.50M655.02 374.75v13.50M621.79 374.75v13.50M986.34 374.75v8.00M930.42 374.75v8.00M879.17 374.75v8.00M831.86 374.75v8.00M787.93 374.75v8.00M746.94 374.75v8.00M708.51 374.75v8.00M672.34 374.75v8.00M638.18 374.75v8.00M605.82 374.75v8.00M1010.22 374.75v5.50M1004.16 374.75v5.50M998.16 374.75v5.50M992.23 374.75v5.50M980.52 374.75v5.50M974.74 374.75v5.50M969.03 374.75v5.50M963.36 374.75v5.50M952.18 374.75v5.50M946.67 374.75v5.50M941.21 374.75v5.50M935.79 374.75v5.50M925.10 374.75v5.50M919.82 374.75v5.50M914.59 374.75v5.50M909.40 374.75v5.50M899.16 374.75v5.50M894.10 374.75v5.50M889.08 374.75v5.50M884.11 374.75v5.50M874.27 374.75v5.50M869.41 374.75v5.50M864.59 374.75v5.50M859.81 374.75v5.50M850.35 374.75v5.50M845.67 374.75v5.50M841.03 374.75v5.50M836.43 374.75v5.50M827.32 374.75v5.50M822.82 374.75v5.50M818.35 374.75v5.50M813.91 374.75v5.50M805.13 374.75v5.50M800.79 374.75v5.50M796.47 374.75v5.50M792.19 374.75v5.50M783.71 374.75v5.50M779.51 374.75v5.50M775.35 374.75v5.50M771.21 374.75v5.50M763.01 374.75v5.50M758.95 374.75v5.50M754.92 374.75v5.50M750.92 374.75v5.50M742.99 374.75v5.50M739.06 374.75v5.50M735.15 374.75v5.50M731.28 374.75v5.50M723.59 374.75v5.50M719.79 374.75v5.50M716.00 374.75v5.50M712.24 374.75v5.50M704.79 374.75v5.50M701.10 374.75v5.50M697.43 374.75v5.50M693.78 374.75v5.50M686.55 374.75v5.50M682.97 374.75v5.50M679.40 374.75v5.50M675.86 374.75v5.50M668.84 374.75v5.50M665.35 374.75v5.50M661.89 374.75v5.50M658.45 374.75v5.50M651.62 374.75v5.50M648.23 374.75v5.50M644.86 374.75v5.50M641.51 374.75v5.50M634.87 374.75v5.50M631.57 374.75v5.50M628.29 374.75v5.50M625.03 374.75v5.50M618.56 374.75v5.50M615.35 374.75v5.50M612.16 374.75v5.50M608.98 374.75v5.50M602.67 374.75v5.50M599.55 374.75v5.50M596.43 374.75v5.50M593.34 374.75v5.50M341.02 374.75v13.50M453.09 374.75v10.80M560.26 374.75v8.00M531.67 374.75v8.00M504.34 374.75v8.00M478.18 374.75v8.00M428.98 374.75v8.00M405.78 374.75v8.00M383.43 374.75v8.00M361.86 374.75v8.00M320.86 374.75v8.00M301.34 374.75v8.00M584.14 374.75v5.50M578.08 374.75v5.50M572.09 374.75v5.50M566.15 374.75v5.50M554.44 374.75v5.50M548.67 374.75v5.50M542.95 374.75v5.50M537.28 374.75v5.50M526.11 374.75v5.50M520.59 374.75v5.50M515.13 374.75v5.50M509.71 374.75v5.50M499.02 374.75v5.50M493.75 374.75v5.50M488.51 374.75v5.50M483.33 374.75v5.50M473.08 374.75v5.50M468.02 374.75v5.50M463.00 374.75v5.50M458.03 374.75v5.50M448.19 374.75v5.50M443.33 374.75v5.50M438.51 374.75v5.50M433.73 374.75v5.50M424.27 374.75v5.50M419.60 374.75v5.50M414.96 374.75v5.50M410.35 374.75v5.50M401.25 374.75v5.50M396.74 374.75v5.50M392.27 374.75v5.50M387.83 374.75v5.50M379.05 374.75v5.50M374.71 374.75v5.50M370.39 374.75v5.50M366.11 374.75v5.50M357.63 374.75v5.50M353.44 374.75v5.50M349.27 374.75v5.50M345.13 374.75v5.50M336.93 374.75v5.50M332.87 374.75v5.50M328.84 374.75v5.50M324.84 374.75v5.50M316.91 374.75v5.50M312.98 374.75v5.50M309.08 374.75v5.50M305.20 374.75v5.50M1235.58 374.75v13.50M1153.50 374.75v13.50M1081.10 374.75v13.50M1016.33 374.75v13.50M1281.14 374.75v10.80M1193.17 374.75v10.80M1116.23 374.75v10.80M1047.86 374.75v10.80M1320.18 374.75v8.00M1310.18 374.75v8.00M1300.35 374.75v8.00M1290.67 374.75v8.00M1271.75 374.75v8.00M1262.51 374.75v8.00M1253.40 374.75v8.00M1244.43 374.75v8.00M1226.86 374.75v8.00M1218.27 374.75v8.00M1209.79 374.75v8.00M1201.42 374.75v8.00M1185.03 374.75v8.00M1177.00 374.75v8.00M1169.06 374.75v8.00M1161.23 374.75v8.00M1145.86 374.75v8.00M1138.32 374.75v8.00M1130.87 374.75v8.00M1123.51 374.75v8.00M1109.04 374.75v8.00M1101.94 374.75v8.00M1094.91 374.75v8.00M1087.97 374.75v8.00M1074.31 374.75v8.00M1067.59 374.75v8.00M1060.94 374.75v8.00M1054.37 374.75v8.00M1041.43 374.75v8.00M1035.06 374.75v8.00M1028.75 374.75v8.00M1022.51 374.75v8.00M1325.24 374.75v5.50M1315.16 374.75v5.50M1305.25 374.75v5.50M1295.49 374.75v5.50M1285.88 374.75v5.50M1276.43 374.75v5.50M1267.11 374.75v5.50M1257.94 374.75v5.50M1248.90 374.75v5.50M1239.99 374.75v5.50M1231.21 374.75v5.50M1222.55 374.75v5.50M1214.01 374.75v5.50M1205.59 374.75v5.50M1197.28 374.75v5.50M1189.09 374.75v5.50M1181.00 374.75v5.50M1173.02 374.75v5.50M1165.14 374.75v5.50M1157.35 374.75v5.50M1149.67 374.75v5.50M1142.08 374.75v5.50M1134.59 374.75v5.50M1127.18 374.75v5.50M1119.86 374.75v5.50M1112.63 374.75v5.50M1105.48 374.75v5.50M1098.42 374.75v5.50M1091.43 374.75v5.50M1084.52 374.75v5.50M1077.69 374.75v5.50M1070.94 374.75v5.50M1064.26 374.75v5.50M1057.65 374.75v5.50M1051.11 374.75v5.50M1044.64 374.75v5.50M1038.23 374.75v5.50M1031.90 374.75v5.50M1025.62 374.75v5.50M1019.42 374.75v5.50" stroke="#2e2e2e" stroke-width="1.15" fill="none"/>
<path d="M1293.92 431.45v-13.50M1325.45 431.45v-13.50M1309.49 431.45v-8.00M1328.70 431.45v-5.50M1322.23 431.45v-5.50M1319.02 431.45v-5.50M1315.82 431.45v-5.50M1312.65 431.45v-5.50M1306.34 431.45v-5.50M1303.21 431.45v-5.50M1300.10 431.45v-5.50M1297.00 431.45v-5.50M1044.68 431.45v-13.50M867.84 431.45v-13.50M1156.76 431.45v-10.80M949.93 431.45v-10.80M1263.93 431.45v-8.00M1235.33 431.45v-8.00M1208.01 431.45v-8.00M1181.85 431.45v-8.00M1132.65 431.45v-8.00M1109.45 431.45v-8.00M1087.09 431.45v-8.00M1065.52 431.45v-8.00M1024.53 431.45v-8.00M1005.01 431.45v-8.00M986.10 431.45v-8.00M967.74 431.45v-8.00M932.61 431.45v-8.00M915.77 431.45v-8.00M899.37 431.45v-8.00M883.41 431.45v-8.00M1287.81 431.45v-5.50M1281.75 431.45v-5.50M1275.75 431.45v-5.50M1269.81 431.45v-5.50M1258.10 431.45v-5.50M1252.33 431.45v-5.50M1246.61 431.45v-5.50M1240.95 431.45v-5.50M1229.77 431.45v-5.50M1224.26 431.45v-5.50M1218.79 431.45v-5.50M1213.38 431.45v-5.50M1202.69 431.45v-5.50M1197.41 431.45v-5.50M1192.18 431.45v-5.50M1186.99 431.45v-5.50M1176.75 431.45v-5.50M1171.69 431.45v-5.50M1166.67 431.45v-5.50M1161.69 431.45v-5.50M1151.86 431.45v-5.50M1147.00 431.45v-5.50M1142.18 431.45v-5.50M1137.39 431.45v-5.50M1127.94 431.45v-5.50M1123.26 431.45v-5.50M1118.62 431.45v-5.50M1114.02 431.45v-5.50M1104.91 431.45v-5.50M1100.41 431.45v-5.50M1095.94 431.45v-5.50M1091.50 431.45v-5.50M1082.72 431.45v-5.50M1078.37 431.45v-5.50M1074.06 431.45v-5.50M1069.78 431.45v-5.50M1061.30 431.45v-5.50M1057.10 431.45v-5.50M1052.93 431.45v-5.50M1048.79 431.45v-5.50M1040.60 431.45v-5.50M1036.54 431.45v-5.50M1032.51 431.45v-5.50M1028.51 431.45v-5.50M1020.57 431.45v-5.50M1016.65 431.45v-5.50M1012.74 431.45v-5.50M1008.86 431.45v-5.50M1001.18 431.45v-5.50M997.37 431.45v-5.50M993.59 431.45v-5.50M989.83 431.45v-5.50M982.38 431.45v-5.50M978.69 431.45v-5.50M975.02 431.45v-5.50M971.37 431.45v-5.50M964.14 431.45v-5.50M960.56 431.45v-5.50M956.99 431.45v-5.50M953.45 431.45v-5.50M946.42 431.45v-5.50M942.94 431.45v-5.50M939.48 431.45v-5.50M936.03 431.45v-5.50M929.20 431.45v-5.50M925.82 431.45v-5.50M922.45 431.45v-5.50M919.10 431.45v-5.50M912.45 431.45v-5.50M909.16 431.45v-5.50M905.88 431.45v-5.50M902.62 431.45v-5.50M896.15 431.45v-5.50M892.94 431.45v-5.50M889.74 431.45v-5.50M886.57 431.45v-5.50M880.26 431.45v-5.50M877.13 431.45v-5.50M874.02 431.45v-5.50M870.93 431.45v-5.50M730.68 431.45v-13.50M618.60 431.45v-13.50M523.85 431.45v-13.50M441.77 431.45v-13.50M369.37 431.45v-13.50M304.60 431.45v-13.50M795.44 431.45v-10.80M672.09 431.45v-10.80M569.40 431.45v-10.80M481.44 431.45v-10.80M404.50 431.45v-10.80M336.13 431.45v-10.80M852.67 431.45v-8.00M837.85 431.45v-8.00M823.39 431.45v-8.00M809.26 431.45v-8.00M781.93 431.45v-8.00M768.71 431.45v-8.00M755.77 431.45v-8.00M743.10 431.45v-8.00M718.51 431.45v-8.00M706.57 431.45v-8.00M694.86 431.45v-8.00M683.37 431.45v-8.00M661.01 431.45v-8.00M650.13 431.45v-8.00M639.44 431.45v-8.00M628.94 431.45v-8.00M608.44 431.45v-8.00M598.45 431.45v-8.00M588.61 431.45v-8.00M578.93 431.45v-8.00M560.02 431.45v-8.00M550.77 431.45v-8.00M541.67 431.45v-8.00M532.69 431.45v-8.00M515.13 431.45v-8.00M506.53 431.45v-8.00M498.05 431.45v-8.00M489.69 431.45v-8.00M473.30 431.45v-8.00M465.26 431.45v-8.00M457.33 431.45v-8.00M449.50 431.45v-8.00M434.13 431.45v-8.00M426.59 431.45v-8.00M419.14 431.45v-8.00M411.78 431.45v-8.00M397.31 431.45v-8.00M390.20 431.45v-8.00M383.18 431.45v-8.00M376.23 431.45v-8.00M362.57 431.45v-8.00M355.85 431.45v-8.00M349.21 431.45v-8.00M342.63 431.45v-8.00M329.69 431.45v-8.00M323.32 431.45v-8.00M317.02 431.45v-8.00M310.78 431.45v-8.00M860.21 431.45v-5.50M845.21 431.45v-5.50M830.58 431.45v-5.50M816.28 431.45v-5.50M802.31 431.45v-5.50M788.65 431.45v-5.50M775.29 431.45v-5.50M762.21 431.45v-5.50M749.40 431.45v-5.50M736.86 431.45v-5.50M724.56 431.45v-5.50M712.51 431.45v-5.50M700.69 431.45v-5.50M689.09 431.45v-5.50M677.70 431.45v-5.50M666.53 431.45v-5.50M655.55 431.45v-5.50M644.77 431.45v-5.50M634.17 431.45v-5.50M623.75 431.45v-5.50M613.50 431.45v-5.50M603.43 431.45v-5.50M593.51 431.45v-5.50M583.75 431.45v-5.50M574.15 431.45v-5.50M564.69 431.45v-5.50M555.38 431.45v-5.50M546.20 431.45v-5.50M537.16 431.45v-5.50M528.25 431.45v-5.50M519.47 431.45v-5.50M510.82 431.45v-5.50M502.28 431.45v-5.50M493.86 431.45v-5.50M485.55 431.45v-5.50M477.35 431.45v-5.50M469.27 431.45v-5.50M461.28 431.45v-5.50M453.40 431.45v-5.50M445.62 431.45v-5.50M437.94 431.45v-5.50M430.35 431.45v-5.50M422.85 431.45v-5.50M415.44 431.45v-5.50M408.13 431.45v-5.50M400.90 431.45v-5.50M393.75 431.45v-5.50M386.68 431.45v-5.50M379.70 431.45v-5.50M372.79 431.45v-5.50M365.96 431.45v-5.50M359.20 431.45v-5.50M352.52 431.45v-5.50M345.91 431.45v-5.50M339.37 431.45v-5.50M332.90 431.45v-5.50M326.50 431.45v-5.50M320.16 431.45v-5.50M313.89 431.45v-5.50M307.68 431.45v-5.50" stroke="#2e2e2e" stroke-width="1.15" fill="none"/>
<path d="M304.60 459.80v-13.50M730.68 459.80v-13.50M363.19 459.80v-13.50M416.67 459.80v-13.50M465.88 459.80v-13.50M511.43 459.80v-13.50M553.84 459.80v-13.50M593.51 459.80v-13.50M630.78 459.80v-13.50M665.91 459.80v-13.50M699.15 459.80v-13.50M334.59 459.80v-8.00M390.51 459.80v-8.00M441.77 459.80v-8.00M489.07 459.80v-8.00M533.00 459.80v-8.00M574.00 459.80v-8.00M612.43 459.80v-8.00M648.60 459.80v-8.00M682.75 459.80v-8.00M715.11 459.80v-8.00M310.72 459.80v-5.50M316.77 459.80v-5.50M322.77 459.80v-5.50M328.71 459.80v-5.50M340.42 459.80v-5.50M346.19 459.80v-5.50M351.91 459.80v-5.50M357.57 459.80v-5.50M368.75 459.80v-5.50M374.26 459.80v-5.50M379.73 459.80v-5.50M385.14 459.80v-5.50M395.83 459.80v-5.50M401.11 459.80v-5.50M406.34 459.80v-5.50M411.53 459.80v-5.50M421.77 459.80v-5.50M426.83 459.80v-5.50M431.85 459.80v-5.50M436.83 459.80v-5.50M446.66 459.80v-5.50M451.52 459.80v-5.50M456.34 459.80v-5.50M461.13 459.80v-5.50M470.59 459.80v-5.50M475.26 459.80v-5.50M479.90 459.80v-5.50M484.50 459.80v-5.50M493.61 459.80v-5.50M498.11 459.80v-5.50M502.58 459.80v-5.50M507.02 459.80v-5.50M515.80 459.80v-5.50M520.15 459.80v-5.50M524.46 459.80v-5.50M528.75 459.80v-5.50M537.23 459.80v-5.50M541.42 459.80v-5.50M545.59 459.80v-5.50M549.73 459.80v-5.50M557.92 459.80v-5.50M561.98 459.80v-5.50M566.01 459.80v-5.50M570.02 459.80v-5.50M577.95 459.80v-5.50M581.88 459.80v-5.50M585.78 459.80v-5.50M589.66 459.80v-5.50M597.34 459.80v-5.50M601.15 459.80v-5.50M604.93 459.80v-5.50M608.69 459.80v-5.50M616.14 459.80v-5.50M619.83 459.80v-5.50M623.50 459.80v-5.50M627.15 459.80v-5.50M634.38 459.80v-5.50M637.97 459.80v-5.50M641.53 459.80v-5.50M645.07 459.80v-5.50M652.10 459.80v-5.50M655.58 459.80v-5.50M659.04 459.80v-5.50M662.49 459.80v-5.50M669.32 459.80v-5.50M672.71 459.80v-5.50M676.07 459.80v-5.50M679.42 459.80v-5.50M686.07 459.80v-5.50M689.36 459.80v-5.50M692.64 459.80v-5.50M695.90 459.80v-5.50M702.37 459.80v-5.50M705.58 459.80v-5.50M708.78 459.80v-5.50M711.95 459.80v-5.50M718.26 459.80v-5.50M721.39 459.80v-5.50M724.50 459.80v-5.50M727.60 459.80v-5.50M979.92 459.80v-13.50M1156.76 459.80v-13.50M867.84 459.80v-10.80M1074.67 459.80v-10.80M760.67 459.80v-8.00M789.27 459.80v-8.00M816.59 459.80v-8.00M842.75 459.80v-8.00M891.95 459.80v-8.00M915.15 459.80v-8.00M937.51 459.80v-8.00M959.08 459.80v-8.00M1000.07 459.80v-8.00M1019.59 459.80v-8.00M1038.50 459.80v-8.00M1056.86 459.80v-8.00M1091.99 459.80v-8.00M1108.83 459.80v-8.00M1125.23 459.80v-8.00M1141.19 459.80v-8.00M736.79 459.80v-5.50M742.85 459.80v-5.50M748.85 459.80v-5.50M754.79 459.80v-5.50M766.50 459.80v-5.50M772.27 459.80v-5.50M777.99 459.80v-5.50M783.65 459.80v-5.50M794.83 459.80v-5.50M800.34 459.80v-5.50M805.81 459.80v-5.50M811.22 459.80v-5.50M821.91 459.80v-5.50M827.19 459.80v-5.50M832.42 459.80v-5.50M837.61 459.80v-5.50M847.85 459.80v-5.50M852.91 459.80v-5.50M857.93 459.80v-5.50M862.91 459.80v-5.50M872.74 459.80v-5.50M877.60 459.80v-5.50M882.42 459.80v-5.50M887.21 459.80v-5.50M896.66 459.80v-5.50M901.34 459.80v-5.50M905.98 459.80v-5.50M910.58 459.80v-5.50M919.69 459.80v-5.50M924.19 459.80v-5.50M928.66 459.80v-5.50M933.10 459.80v-5.50M941.88 459.80v-5.50M946.23 459.80v-5.50M950.54 459.80v-5.50M954.82 459.80v-5.50M963.30 459.80v-5.50M967.50 459.80v-5.50M971.67 459.80v-5.50M975.81 459.80v-5.50M984.00 459.80v-5.50M988.06 459.80v-5.50M992.09 459.80v-5.50M996.09 459.80v-5.50M1004.03 459.80v-5.50M1007.95 459.80v-5.50M1011.86 459.80v-5.50M1015.74 459.80v-5.50M1023.42 459.80v-5.50M1027.23 459.80v-5.50M1031.01 459.80v-5.50M1034.77 459.80v-5.50M1042.22 459.80v-5.50M1045.91 459.80v-5.50M1049.58 459.80v-5.50M1053.23 459.80v-5.50M1060.46 459.80v-5.50M1064.04 459.80v-5.50M1067.61 459.80v-5.50M1071.15 459.80v-5.50M1078.18 459.80v-5.50M1081.66 459.80v-5.50M1085.12 459.80v-5.50M1088.57 459.80v-5.50M1095.40 459.80v-5.50M1098.78 459.80v-5.50M1102.15 459.80v-5.50M1105.50 459.80v-5.50M1112.15 459.80v-5.50M1115.44 459.80v-5.50M1118.72 459.80v-5.50M1121.98 459.80v-5.50M1128.45 459.80v-5.50M1131.66 459.80v-5.50M1134.86 459.80v-5.50M1138.03 459.80v-5.50M1144.34 459.80v-5.50M1147.47 459.80v-5.50M1150.58 459.80v-5.50M1153.67 459.80v-5.50M1293.92 459.80v-13.50M1229.16 459.80v-10.80M1171.93 459.80v-8.00M1186.75 459.80v-8.00M1201.21 459.80v-8.00M1215.34 459.80v-8.00M1242.67 459.80v-8.00M1255.89 459.80v-8.00M1268.83 459.80v-8.00M1281.50 459.80v-8.00M1306.09 459.80v-8.00M1318.03 459.80v-8.00M1329.74 459.80v-8.00M1164.39 459.80v-5.50M1179.39 459.80v-5.50M1194.02 459.80v-5.50M1208.32 459.80v-5.50M1222.29 459.80v-5.50M1235.95 459.80v-5.50M1249.31 459.80v-5.50M1262.39 459.80v-5.50M1275.20 459.80v-5.50M1287.74 459.80v-5.50M1300.04 459.80v-5.50M1312.09 459.80v-5.50M1323.91 459.80v-5.50" stroke="#2e2e2e" stroke-width="1.15" fill="none"/>
<path d="M304.60 459.80v13.50M730.68 459.80v13.50M363.19 459.80v13.50M416.67 459.80v13.50M465.88 459.80v13.50M511.43 459.80v13.50M553.84 459.80v13.50M593.51 459.80v13.50M630.78 459.80v13.50M665.91 459.80v13.50M699.15 459.80v13.50M334.59 459.80v8.00M390.51 459.80v8.00M441.77 459.80v8.00M489.07 459.80v8.00M533.00 459.80v8.00M574.00 459.80v8.00M612.43 459.80v8.00M648.60 459.80v8.00M682.75 459.80v8.00M715.11 459.80v8.00M310.72 459.80v5.50M316.77 459.80v5.50M322.77 459.80v5.50M328.71 459.80v5.50M340.42 459.80v5.50M346.19 459.80v5.50M351.91 459.80v5.50M357.57 459.80v5.50M368.75 459.80v5.50M374.26 459.80v5.50M379.73 459.80v5.50M385.14 459.80v5.50M395.83 459.80v5.50M401.11 459.80v5.50M406.34 459.80v5.50M411.53 459.80v5.50M421.77 459.80v5.50M426.83 459.80v5.50M431.85 459.80v5.50M436.83 459.80v5.50M446.66 459.80v5.50M451.52 459.80v5.50M456.34 459.80v5.50M461.13 459.80v5.50M470.59 459.80v5.50M475.26 459.80v5.50M479.90 459.80v5.50M484.50 459.80v5.50M493.61 459.80v5.50M498.11 459.80v5.50M502.58 459.80v5.50M507.02 459.80v5.50M515.80 459.80v5.50M520.15 459.80v5.50M524.46 459.80v5.50M528.75 459.80v5.50M537.23 459.80v5.50M541.42 459.80v5.50M545.59 459.80v5.50M549.73 459.80v5.50M557.92 459.80v5.50M561.98 459.80v5.50M566.01 459.80v5.50M570.02 459.80v5.50M577.95 459.80v5.50M581.88 459.80v5.50M585.78 459.80v5.50M589.66 459.80v5.50M597.34 459.80v5.50M601.15 459.80v5.50M604.93 459.80v5.50M608.69 459.80v5.50M616.14 459.80v5.50M619.83 459.80v5.50M623.50 459.80v5.50M627.15 459.80v5.50M634.38 459.80v5.50M637.97 459.80v5.50M641.53 459.80v5.50M645.07 459.80v5.50M652.10 459.80v5.50M655.58 459.80v5.50M659.04 459.80v5.50M662.49 459.80v5.50M669.32 459.80v5.50M672.71 459.80v5.50M676.07 459.80v5.50M679.42 459.80v5.50M686.07 459.80v5.50M689.36 459.80v5.50M692.64 459.80v5.50M695.90 459.80v5.50M702.37 459.80v5.50M705.58 459.80v5.50M708.78 459.80v5.50M711.95 459.80v5.50M718.26 459.80v5.50M721.39 459.80v5.50M724.50 459.80v5.50M727.60 459.80v5.50M979.92 459.80v13.50M1156.76 459.80v13.50M867.84 459.80v10.80M1074.67 459.80v10.80M760.67 459.80v8.00M789.27 459.80v8.00M816.59 459.80v8.00M842.75 459.80v8.00M891.95 459.80v8.00M915.15 459.80v8.00M937.51 459.80v8.00M959.08 459.80v8.00M1000.07 459.80v8.00M1019.59 459.80v8.00M1038.50 459.80v8.00M1056.86 459.80v8.00M1091.99 459.80v8.00M1108.83 459.80v8.00M1125.23 459.80v8.00M1141.19 459.80v8.00M736.79 459.80v5.50M742.85 459.80v5.50M748.85 459.80v5.50M754.79 459.80v5.50M766.50 459.80v5.50M772.27 459.80v5.50M777.99 459.80v5.50M783.65 459.80v5.50M794.83 459.80v5.50M800.34 459.80v5.50M805.81 459.80v5.50M811.22 459.80v5.50M821.91 459.80v5.50M827.19 459.80v5.50M832.42 459.80v5.50M837.61 459.80v5.50M847.85 459.80v5.50M852.91 459.80v5.50M857.93 459.80v5.50M862.91 459.80v5.50M872.74 459.80v5.50M877.60 459.80v5.50M882.42 459.80v5.50M887.21 459.80v5.50M896.66 459.80v5.50M901.34 459.80v5.50M905.98 459.80v5.50M910.58 459.80v5.50M919.69 459.80v5.50M924.19 459.80v5.50M928.66 459.80v5.50M933.10 459.80v5.50M941.88 459.80v5.50M946.23 459.80v5.50M950.54 459.80v5.50M954.82 459.80v5.50M963.30 459.80v5.50M967.50 459.80v5.50M971.67 459.80v5.50M975.81 459.80v5.50M984.00 459.80v5.50M988.06 459.80v5.50M992.09 459.80v5.50M996.09 459.80v5.50M1004.03 459.80v5.50M1007.95 459.80v5.50M1011.86 459.80v5.50M1015.74 459.80v5.50M1023.42 459.80v5.50M1027.23 459.80v5.50M1031.01 459.80v5.50M1034.77 459.80v5.50M1042.22 459.80v5.50M1045.91 459.80v5.50M1049.58 459.80v5.50M1053.23 459.80v5.50M1060.46 459.80v5.50M1064.04 459.80v5.50M1067.61 459.80v5.50M1071.15 459.80v5.50M1078.18 459.80v5.50M1081.66 459.80v5.50M1085.12 459.80v5.50M1088.57 459.80v5.50M1095.40 459.80v5.50M1098.78 459.80v5.50M1102.15 459.80v5.50M1105.50 459.80v5.50M1112.15 459.80v5.50M1115.44 459.80v5.50M1118.72 459.80v5.50M1121.98 459.80v5.50M1128.45 459.80v5.50M1131.66 459.80v5.50M1134.86 459.80v5.50M1138.03 459.80v5.50M1144.34 459.80v5.50M1147.47 459.80v5.50M1150.58 459.80v5.50M1153.67 459.80v5.50M1293.92 459.80v13.50M1229.16 459.80v10.80M1171.93 459.80v8.00M1186.75 459.80v8.00M1201.21 459.80v8.00M1215.34 459.80v8.00M1242.67 459.80v8.00M1255.89 459.80v8.00M1268.83 459.80v8.00M1281.50 459.80v8.00M1306.09 459.80v8.00M1318.03 459.80v8.00M1329.74 459.80v8.00M1164.39 459.80v5.50M1179.39 459.80v5.50M1194.02 459.80v5.50M1208.32 459.80v5.50M1222.29 459.80v5.50M1235.95 459.80v5.50M1249.31 459.80v5.50M1262.39 459.80v5.50M1275.20 459.80v5.50M1287.74 459.80v5.50M1300.04 459.80v5.50M1312.09 459.80v5.50M1323.91 459.80v5.50" stroke="#2e2e2e" stroke-width="1.15" fill="none"/>
<path d="M304.60 488.15v13.50M421.77 488.15v13.50M528.75 488.15v13.50M627.15 488.15v13.50M718.26 488.15v13.50M803.08 488.15v13.50M882.42 488.15v13.50M956.95 488.15v13.50M1027.23 488.15v13.50M1093.70 488.15v13.50M1156.76 488.15v13.50M364.58 488.15v10.80M476.42 488.15v10.80M578.93 488.15v10.80M673.55 488.15v10.80M761.40 488.15v10.80M843.39 488.15v10.80M920.25 488.15v10.80M992.59 488.15v10.80M1060.91 488.15v10.80M1125.63 488.15v10.80M316.83 488.15v8.00M328.95 488.15v8.00M340.94 488.15v8.00M352.82 488.15v8.00M376.24 488.15v8.00M387.78 488.15v8.00M399.22 488.15v8.00M410.55 488.15v8.00M432.90 488.15v8.00M443.93 488.15v8.00M454.85 488.15v8.00M465.69 488.15v8.00M487.07 488.15v8.00M497.62 488.15v8.00M508.08 488.15v8.00M518.46 488.15v8.00M538.95 488.15v8.00M549.07 488.15v8.00M559.10 488.15v8.00M569.06 488.15v8.00M588.73 488.15v8.00M598.45 488.15v8.00M608.09 488.15v8.00M617.66 488.15v8.00M636.57 488.15v8.00M645.92 488.15v8.00M655.20 488.15v8.00M664.41 488.15v8.00M682.62 488.15v8.00M691.63 488.15v8.00M700.57 488.15v8.00M709.45 488.15v8.00M727.01 488.15v8.00M735.70 488.15v8.00M744.33 488.15v8.00M752.89 488.15v8.00M769.85 488.15v8.00M778.24 488.15v8.00M786.58 488.15v8.00M794.86 488.15v8.00M811.25 488.15v8.00M819.36 488.15v8.00M827.42 488.15v8.00M835.43 488.15v8.00M851.30 488.15v8.00M859.15 488.15v8.00M866.96 488.15v8.00M874.71 488.15v8.00M890.08 488.15v8.00M897.70 488.15v8.00M905.26 488.15v8.00M912.78 488.15v8.00M927.68 488.15v8.00M935.07 488.15v8.00M942.41 488.15v8.00M949.70 488.15v8.00M964.17 488.15v8.00M971.33 488.15v8.00M978.46 488.15v8.00M985.55 488.15v8.00M999.60 488.15v8.00M1006.56 488.15v8.00M1013.49 488.15v8.00M1020.38 488.15v8.00M1034.04 488.15v8.00M1040.81 488.15v8.00M1047.55 488.15v8.00M1054.25 488.15v8.00M1067.54 488.15v8.00M1074.13 488.15v8.00M1080.69 488.15v8.00M1087.21 488.15v8.00M1100.15 488.15v8.00M1106.57 488.15v8.00M1112.96 488.15v8.00M1119.31 488.15v8.00M1131.92 488.15v8.00M1138.17 488.15v8.00M1144.40 488.15v8.00M1150.59 488.15v8.00M310.73 488.15v5.50M322.90 488.15v5.50M334.96 488.15v5.50M346.89 488.15v5.50M358.71 488.15v5.50M370.42 488.15v5.50M382.02 488.15v5.50M393.51 488.15v5.50M404.89 488.15v5.50M416.17 488.15v5.50M427.35 488.15v5.50M438.43 488.15v5.50M449.40 488.15v5.50M460.28 488.15v5.50M471.07 488.15v5.50M481.76 488.15v5.50M492.36 488.15v5.50M502.86 488.15v5.50M513.28 488.15v5.50M523.61 488.15v5.50M533.86 488.15v5.50M544.02 488.15v5.50M554.10 488.15v5.50M564.09 488.15v5.50M574.01 488.15v5.50M583.84 488.15v5.50M593.60 488.15v5.50M603.28 488.15v5.50M612.88 488.15v5.50M622.41 488.15v5.50M631.87 488.15v5.50M641.26 488.15v5.50M650.57 488.15v5.50M659.81 488.15v5.50M668.99 488.15v5.50M678.09 488.15v5.50M687.13 488.15v5.50M696.11 488.15v5.50M705.02 488.15v5.50M713.86 488.15v5.50M722.64 488.15v5.50M731.36 488.15v5.50M740.02 488.15v5.50M748.62 488.15v5.50M757.15 488.15v5.50M765.63 488.15v5.50M774.05 488.15v5.50M782.42 488.15v5.50M790.72 488.15v5.50M798.97 488.15v5.50M807.17 488.15v5.50M815.31 488.15v5.50M823.40 488.15v5.50M831.44 488.15v5.50M839.42 488.15v5.50M847.35 488.15v5.50M855.23 488.15v5.50M863.06 488.15v5.50M870.84 488.15v5.50M878.57 488.15v5.50M886.26 488.15v5.50M893.89 488.15v5.50M901.48 488.15v5.50M909.03 488.15v5.50M916.52 488.15v5.50M923.97 488.15v5.50M931.38 488.15v5.50M938.74 488.15v5.50M946.06 488.15v5.50M953.33 488.15v5.50M960.57 488.15v5.50M967.75 488.15v5.50M974.90 488.15v5.50M982.01 488.15v5.50M989.07 488.15v5.50M996.10 488.15v5.50M1003.08 488.15v5.50M1010.03 488.15v5.50M1016.94 488.15v5.50M1023.81 488.15v5.50M1030.64 488.15v5.50M1037.43 488.15v5.50M1044.18 488.15v5.50M1050.90 488.15v5.50M1057.58 488.15v5.50M1064.23 488.15v5.50M1070.84 488.15v5.50M1077.41 488.15v5.50M1083.95 488.15v5.50M1090.46 488.15v5.50M1096.93 488.15v5.50M1103.36 488.15v5.50M1109.77 488.15v5.50M1116.14 488.15v5.50M1122.47 488.15v5.50M1128.78 488.15v5.50M1135.05 488.15v5.50M1141.29 488.15v5.50M1147.50 488.15v5.50M1153.68 488.15v5.50M1216.74 488.15v10.80M1273.93 488.15v10.80M1328.58 488.15v10.80M1187.11 488.15v8.00M1245.67 488.15v8.00M1301.56 488.15v8.00M1162.89 488.15v5.50M1168.99 488.15v5.50M1175.06 488.15v5.50M1181.10 488.15v5.50M1193.10 488.15v5.50M1199.05 488.15v5.50M1204.97 488.15v5.50M1210.87 488.15v5.50M1222.58 488.15v5.50M1228.39 488.15v5.50M1234.18 488.15v5.50M1239.94 488.15v5.50M1251.37 488.15v5.50M1257.05 488.15v5.50M1262.70 488.15v5.50M1268.33 488.15v5.50M1279.51 488.15v5.50M1285.06 488.15v5.50M1290.58 488.15v5.50M1296.08 488.15v5.50M1307.01 488.15v5.50M1312.44 488.15v5.50M1317.84 488.15v5.50M1323.22 488.15v5.50" stroke="#2e2e2e" stroke-width="1.15" fill="none"/>
<path d="M429.35 516.50v13.50M593.51 516.50v13.50M738.31 516.50v13.50M867.84 516.50v13.50M319.18 516.50v10.80M357.01 516.50v10.80M393.71 516.50v10.80M463.98 516.50v10.80M497.67 516.50v10.80M530.45 516.50v10.80M562.39 516.50v10.80M623.87 516.50v10.80M653.49 516.50v10.80M682.42 516.50v10.80M710.69 516.50v10.80M765.33 516.50v10.80M791.77 516.50v10.80M817.66 516.50v10.80M843.01 516.50v10.80M299.82 516.50v8.00M338.24 516.50v8.00M375.50 516.50v8.00M411.66 516.50v8.00M446.79 516.50v8.00M480.94 516.50v8.00M514.17 516.50v8.00M546.52 516.50v8.00M578.05 516.50v8.00M608.78 516.50v8.00M638.77 516.50v8.00M668.04 516.50v8.00M696.64 516.50v8.00M724.58 516.50v8.00M751.90 516.50v8.00M778.63 516.50v8.00M804.78 516.50v8.00M830.40 516.50v8.00M855.49 516.50v8.00M303.71 516.50v5.50M307.60 516.50v5.50M311.47 516.50v5.50M315.33 516.50v5.50M323.01 516.50v5.50M326.84 516.50v5.50M330.65 516.50v5.50M334.45 516.50v5.50M342.02 516.50v5.50M345.78 516.50v5.50M349.54 516.50v5.50M353.28 516.50v5.50M360.73 516.50v5.50M364.44 516.50v5.50M368.14 516.50v5.50M371.82 516.50v5.50M379.16 516.50v5.50M382.81 516.50v5.50M386.46 516.50v5.50M390.09 516.50v5.50M397.32 516.50v5.50M400.92 516.50v5.50M404.51 516.50v5.50M408.09 516.50v5.50M415.22 516.50v5.50M418.76 516.50v5.50M422.30 516.50v5.50M425.83 516.50v5.50M432.86 516.50v5.50M436.35 516.50v5.50M439.84 516.50v5.50M443.32 516.50v5.50M450.24 516.50v5.50M453.69 516.50v5.50M457.13 516.50v5.50M460.56 516.50v5.50M467.39 516.50v5.50M470.79 516.50v5.50M474.18 516.50v5.50M477.57 516.50v5.50M484.30 516.50v5.50M487.66 516.50v5.50M491.00 516.50v5.50M494.34 516.50v5.50M500.98 516.50v5.50M504.29 516.50v5.50M507.59 516.50v5.50M510.88 516.50v5.50M517.44 516.50v5.50M520.71 516.50v5.50M523.96 516.50v5.50M527.21 516.50v5.50M533.68 516.50v5.50M536.90 516.50v5.50M540.12 516.50v5.50M543.32 516.50v5.50M549.71 516.50v5.50M552.89 516.50v5.50M556.06 516.50v5.50M559.23 516.50v5.50M565.53 516.50v5.50M568.67 516.50v5.50M571.81 516.50v5.50M574.93 516.50v5.50M581.16 516.50v5.50M584.26 516.50v5.50M587.35 516.50v5.50M590.43 516.50v5.50M596.58 516.50v5.50M599.64 516.50v5.50M602.70 516.50v5.50M605.74 516.50v5.50M611.82 516.50v5.50M614.84 516.50v5.50M617.86 516.50v5.50M620.87 516.50v5.50M626.86 516.50v5.50M629.85 516.50v5.50M632.83 516.50v5.50M635.80 516.50v5.50M641.73 516.50v5.50M644.68 516.50v5.50M647.63 516.50v5.50M650.56 516.50v5.50M656.42 516.50v5.50M659.33 516.50v5.50M662.24 516.50v5.50M665.15 516.50v5.50M670.93 516.50v5.50M673.82 516.50v5.50M676.69 516.50v5.50M679.56 516.50v5.50M685.28 516.50v5.50M688.13 516.50v5.50M690.97 516.50v5.50M693.81 516.50v5.50M699.46 516.50v5.50M702.27 516.50v5.50M705.08 516.50v5.50M707.89 516.50v5.50M713.48 516.50v5.50M716.26 516.50v5.50M719.04 516.50v5.50M721.81 516.50v5.50M727.34 516.50v5.50M730.09 516.50v5.50M732.84 516.50v5.50M735.58 516.50v5.50M741.04 516.50v5.50M743.77 516.50v5.50M746.48 516.50v5.50M749.19 516.50v5.50M754.60 516.50v5.50M757.29 516.50v5.50M759.98 516.50v5.50M762.66 516.50v5.50M768.00 516.50v5.50M770.67 516.50v5.50M773.33 516.50v5.50M775.98 516.50v5.50M781.27 516.50v5.50M783.90 516.50v5.50M786.53 516.50v5.50M789.16 516.50v5.50M794.39 516.50v5.50M797.00 516.50v5.50M799.60 516.50v5.50M802.19 516.50v5.50M807.37 516.50v5.50M809.95 516.50v5.50M812.52 516.50v5.50M815.09 516.50v5.50M820.22 516.50v5.50M822.77 516.50v5.50M825.32 516.50v5.50M827.86 516.50v5.50M832.93 516.50v5.50M835.46 516.50v5.50M837.98 516.50v5.50M840.50 516.50v5.50M845.51 516.50v5.50M848.01 516.50v5.50M850.51 516.50v5.50M853.00 516.50v5.50M857.97 516.50v5.50M860.45 516.50v5.50M862.92 516.50v5.50M865.38 516.50v5.50M1091.99 516.50v13.50M1281.50 516.50v13.50M985.02 516.50v10.80M1190.40 516.50v10.80M892.19 516.50v8.00M916.06 516.50v8.00M939.48 516.50v8.00M962.46 516.50v8.00M1007.17 516.50v8.00M1028.93 516.50v8.00M1050.31 516.50v8.00M1071.33 516.50v8.00M1112.31 516.50v8.00M1132.30 516.50v8.00M1151.97 516.50v8.00M1171.33 516.50v8.00M1209.16 516.50v8.00M1227.65 516.50v8.00M1245.87 516.50v8.00M1263.81 516.50v8.00M1298.94 516.50v8.00M1316.14 516.50v8.00M872.75 516.50v5.50M877.64 516.50v5.50M882.51 516.50v5.50M887.36 516.50v5.50M897.00 516.50v5.50M901.79 516.50v5.50M906.57 516.50v5.50M911.32 516.50v5.50M920.78 516.50v5.50M925.48 516.50v5.50M930.17 516.50v5.50M934.83 516.50v5.50M944.11 516.50v5.50M948.72 516.50v5.50M953.32 516.50v5.50M957.90 516.50v5.50M967.01 516.50v5.50M971.53 516.50v5.50M976.04 516.50v5.50M980.54 516.50v5.50M989.48 516.50v5.50M993.93 516.50v5.50M998.36 516.50v5.50M1002.77 516.50v5.50M1011.55 516.50v5.50M1015.92 516.50v5.50M1020.27 516.50v5.50M1024.61 516.50v5.50M1033.24 516.50v5.50M1037.53 516.50v5.50M1041.80 516.50v5.50M1046.07 516.50v5.50M1054.54 516.50v5.50M1058.76 516.50v5.50M1062.96 516.50v5.50M1067.15 516.50v5.50M1075.49 516.50v5.50M1079.63 516.50v5.50M1083.77 516.50v5.50M1087.89 516.50v5.50M1096.08 516.50v5.50M1100.16 516.50v5.50M1104.22 516.50v5.50M1108.27 516.50v5.50M1116.34 516.50v5.50M1120.35 516.50v5.50M1124.35 516.50v5.50M1128.33 516.50v5.50M1136.26 516.50v5.50M1140.21 516.50v5.50M1144.14 516.50v5.50M1148.06 516.50v5.50M1155.87 516.50v5.50M1159.75 516.50v5.50M1163.63 516.50v5.50M1167.49 516.50v5.50M1175.17 516.50v5.50M1178.99 516.50v5.50M1182.81 516.50v5.50M1186.61 516.50v5.50M1194.17 516.50v5.50M1197.94 516.50v5.50M1201.69 516.50v5.50M1205.43 516.50v5.50M1212.88 516.50v5.50M1216.59 516.50v5.50M1220.29 516.50v5.50M1223.98 516.50v5.50M1231.32 516.50v5.50M1234.97 516.50v5.50M1238.61 516.50v5.50M1242.25 516.50v5.50M1249.48 516.50v5.50M1253.08 516.50v5.50M1256.67 516.50v5.50M1260.25 516.50v5.50M1267.37 516.50v5.50M1270.92 516.50v5.50M1274.46 516.50v5.50M1277.99 516.50v5.50M1285.01 516.50v5.50M1288.51 516.50v5.50M1292.00 516.50v5.50M1295.47 516.50v5.50M1302.40 516.50v5.50M1305.85 516.50v5.50M1309.29 516.50v5.50M1312.72 516.50v5.50M1319.55 516.50v5.50M1322.95 516.50v5.50M1326.34 516.50v5.50M1329.72 516.50v5.50" stroke="#2e2e2e" stroke-width="1.15" fill="none"/>
<path d="M304.60 573.20v-13.50M446.14 573.20v-13.50M587.68 573.20v-13.50M729.22 573.20v-13.50M870.76 573.20v-13.50M1012.30 573.20v-13.50M1153.84 573.20v-13.50M1295.38 573.20v-13.50M375.37 573.20v-10.80M516.91 573.20v-10.80M658.45 573.20v-10.80M799.99 573.20v-10.80M941.53 573.20v-10.80M1083.07 573.20v-10.80M1224.61 573.20v-10.80M318.75 573.20v-8.00M332.91 573.20v-8.00M347.06 573.20v-8.00M361.22 573.20v-8.00M389.52 573.20v-8.00M403.68 573.20v-8.00M417.83 573.20v-8.00M431.99 573.20v-8.00M460.29 573.20v-8.00M474.45 573.20v-8.00M488.60 573.20v-8.00M502.76 573.20v-8.00M531.06 573.20v-8.00M545.22 573.20v-8.00M559.37 573.20v-8.00M573.53 573.20v-8.00M601.83 573.20v-8.00M615.99 573.20v-8.00M630.14 573.20v-8.00M644.30 573.20v-8.00M672.60 573.20v-8.00M686.76 573.20v-8.00M700.91 573.20v-8.00M715.07 573.20v-8.00M743.37 573.20v-8.00M757.53 573.20v-8.00M771.68 573.20v-8.00M785.84 573.20v-8.00M814.14 573.20v-8.00M828.30 573.20v-8.00M842.45 573.20v-8.00M856.61 573.20v-8.00M884.91 573.20v-8.00M899.07 573.20v-8.00M913.22 573.20v-8.00M927.38 573.20v-8.00M955.68 573.20v-8.00M969.84 573.20v-8.00M983.99 573.20v-8.00M998.15 573.20v-8.00M1026.45 573.20v-8.00M1040.61 573.20v-8.00M1054.76 573.20v-8.00M1068.92 573.20v-8.00M1097.22 573.20v-8.00M1111.38 573.20v-8.00M1125.53 573.20v-8.00M1139.69 573.20v-8.00M1167.99 573.20v-8.00M1182.15 573.20v-8.00M1196.30 573.20v-8.00M1210.46 573.20v-8.00M1238.76 573.20v-8.00M1252.92 573.20v-8.00M1267.07 573.20v-8.00M1281.23 573.20v-8.00M1309.53 573.20v-8.00M1323.69 573.20v-8.00M307.43 573.20v-5.50M310.26 573.20v-5.50M313.09 573.20v-5.50M315.92 573.20v-5.50M321.58 573.20v-5.50M324.42 573.20v-5.50M327.25 573.20v-5.50M330.08 573.20v-5.50M335.74 573.20v-5.50M338.57 573.20v-5.50M341.40 573.20v-5.50M344.23 573.20v-5.50M349.89 573.20v-5.50M352.72 573.20v-5.50M355.55 573.20v-5.50M358.39 573.20v-5.50M364.05 573.20v-5.50M366.88 573.20v-5.50M369.71 573.20v-5.50M372.54 573.20v-5.50M378.20 573.20v-5.50M381.03 573.20v-5.50M383.86 573.20v-5.50M386.69 573.20v-5.50M392.35 573.20v-5.50M395.19 573.20v-5.50M398.02 573.20v-5.50M400.85 573.20v-5.50M406.51 573.20v-5.50M409.34 573.20v-5.50M412.17 573.20v-5.50M415.00 573.20v-5.50M420.66 573.20v-5.50M423.49 573.20v-5.50M426.32 573.20v-5.50M429.16 573.20v-5.50M434.82 573.20v-5.50M437.65 573.20v-5.50M440.48 573.20v-5.50M443.31 573.20v-5.50M448.97 573.20v-5.50M451.80 573.20v-5.50M454.63 573.20v-5.50M457.46 573.20v-5.50M463.12 573.20v-5.50M465.96 573.20v-5.50M468.79 573.20v-5.50M471.62 573.20v-5.50M477.28 573.20v-5.50M480.11 573.20v-5.50M482.94 573.20v-5.50M485.77 573.20v-5.50M491.43 573.20v-5.50M494.26 573.20v-5.50M497.09 573.20v-5.50M499.93 573.20v-5.50M505.59 573.20v-5.50M508.42 573.20v-5.50M511.25 573.20v-5.50M514.08 573.20v-5.50M519.74 573.20v-5.50M522.57 573.20v-5.50M525.40 573.20v-5.50M528.23 573.20v-5.50M533.89 573.20v-5.50M536.73 573.20v-5.50M539.56 573.20v-5.50M542.39 573.20v-5.50M548.05 573.20v-5.50M550.88 573.20v-5.50M553.71 573.20v-5.50M556.54 573.20v-5.50M562.20 573.20v-5.50M565.03 573.20v-5.50M567.86 573.20v-5.50M570.70 573.20v-5.50M576.36 573.20v-5.50M579.19 573.20v-5.50M582.02 573.20v-5.50M584.85 573.20v-5.50M590.51 573.20v-5.50M593.34 573.20v-5.50M596.17 573.20v-5.50M599.00 573.20v-5.50M604.66 573.20v-5.50M607.50 573.20v-5.50M610.33 573.20v-5.50M613.16 573.20v-5.50M618.82 573.20v-5.50M621.65 573.20v-5.50M624.48 573.20v-5.50M627.31 573.20v-5.50M632.97 573.20v-5.50M635.80 573.20v-5.50M638.63 573.20v-5.50M641.47 573.20v-5.50M647.13 573.20v-5.50M649.96 573.20v-5.50M652.79 573.20v-5.50M655.62 573.20v-5.50M661.28 573.20v-5.50M664.11 573.20v-5.50M666.94 573.20v-5.50M669.77 573.20v-5.50M675.43 573.20v-5.50M678.27 573.20v-5.50M681.10 573.20v-5.50M683.93 573.20v-5.50M689.59 573.20v-5.50M692.42 573.20v-5.50M695.25 573.20v-5.50M698.08 573.20v-5.50M703.74 573.20v-5.50M706.57 573.20v-5.50M709.40 573.20v-5.50M712.24 573.20v-5.50M717.90 573.20v-5.50M720.73 573.20v-5.50M723.56 573.20v-5.50M726.39 573.20v-5.50M732.05 573.20v-5.50M734.88 573.20v-5.50M737.71 573.20v-5.50M740.54 573.20v-5.50M746.20 573.20v-5.50M749.04 573.20v-5.50M751.87 573.20v-5.50M754.70 573.20v-5.50M760.36 573.20v-5.50M763.19 573.20v-5.50M766.02 573.20v-5.50M768.85 573.20v-5.50M774.51 573.20v-5.50M777.34 573.20v-5.50M780.17 573.20v-5.50M783.01 573.20v-5.50M788.67 573.20v-5.50M791.50 573.20v-5.50M794.33 573.20v-5.50M797.16 573.20v-5.50M802.82 573.20v-5.50M805.65 573.20v-5.50M808.48 573.20v-5.50M811.31 573.20v-5.50M816.97 573.20v-5.50M819.81 573.20v-5.50M822.64 573.20v-5.50M825.47 573.20v-5.50M831.13 573.20v-5.50M833.96 573.20v-5.50M836.79 573.20v-5.50M839.62 573.20v-5.50M845.28 573.20v-5.50M848.11 573.20v-5.50M850.94 573.20v-5.50M853.78 573.20v-5.50M859.44 573.20v-5.50M862.27 573.20v-5.50M865.10 573.20v-5.50M867.93 573.20v-5.50M873.59 573.20v-5.50M876.42 573.20v-5.50M879.25 573.20v-5.50M882.08 573.20v-5.50M887.74 573.20v-5.50M890.58 573.20v-5.50M893.41 573.20v-5.50M896.24 573.20v-5.50M901.90 573.20v-5.50M904.73 573.20v-5.50M907.56 573.20v-5.50M910.39 573.20v-5.50M916.05 573.20v-5.50M918.88 573.20v-5.50M921.71 573.20v-5.50M924.55 573.20v-5.50M930.21 573.20v-5.50M933.04 573.20v-5.50M935.87 573.20v-5.50M938.70 573.20v-5.50M944.36 573.20v-5.50M947.19 573.20v-5.50M950.02 573.20v-5.50M952.85 573.20v-5.50M958.51 573.20v-5.50M961.35 573.20v-5.50M964.18 573.20v-5.50M967.01 573.20v-5.50M972.67 573.20v-5.50M975.50 573.20v-5.50M978.33 573.20v-5.50M981.16 573.20v-5.50M986.82 573.20v-5.50M989.65 573.20v-5.50M992.48 573.20v-5.50M995.32 573.20v-5.50M1000.98 573.20v-5.50M1003.81 573.20v-5.50M1006.64 573.20v-5.50M1009.47 573.20v-5.50M1015.13 573.20v-5.50M1017.96 573.20v-5.50M1020.79 573.20v-5.50M1023.62 573.20v-5.50M1029.28 573.20v-5.50M1032.12 573.20v-5.50M1034.95 573.20v-5.50M1037.78 573.20v-5.50M1043.44 573.20v-5.50M1046.27 573.20v-5.50M1049.10 573.20v-5.50M1051.93 573.20v-5.50M1057.59 573.20v-5.50M1060.42 573.20v-5.50M1063.25 573.20v-5.50M1066.09 573.20v-5.50M1071.75 573.20v-5.50M1074.58 573.20v-5.50M1077.41 573.20v-5.50M1080.24 573.20v-5.50M1085.90 573.20v-5.50M1088.73 573.20v-5.50M1091.56 573.20v-5.50M1094.39 573.20v-5.50M1100.05 573.20v-5.50M1102.89 573.20v-5.50M1105.72 573.20v-5.50M1108.55 573.20v-5.50M1114.21 573.20v-5.50M1117.04 573.20v-5.50M1119.87 573.20v-5.50M1122.70 573.20v-5.50M1128.36 573.20v-5.50M1131.19 573.20v-5.50M1134.02 573.20v-5.50M1136.86 573.20v-5.50M1142.52 573.20v-5.50M1145.35 573.20v-5.50M1148.18 573.20v-5.50M1151.01 573.20v-5.50M1156.67 573.20v-5.50M1159.50 573.20v-5.50M1162.33 573.20v-5.50M1165.16 573.20v-5.50M1170.82 573.20v-5.50M1173.66 573.20v-5.50M1176.49 573.20v-5.50M1179.32 573.20v-5.50M1184.98 573.20v-5.50M1187.81 573.20v-5.50M1190.64 573.20v-5.50M1193.47 573.20v-5.50M1199.13 573.20v-5.50M1201.96 573.20v-5.50M1204.79 573.20v-5.50M1207.63 573.20v-5.50M1213.29 573.20v-5.50M1216.12 573.20v-5.50M1218.95 573.20v-5.50M1221.78 573.20v-5.50M1227.44 573.20v-5.50M1230.27 573.20v-5.50M1233.10 573.20v-5.50M1235.93 573.20v-5.50M1241.59 573.20v-5.50M1244.43 573.20v-5.50M1247.26 573.20v-5.50M1250.09 573.20v-5.50M1255.75 573.20v-5.50M1258.58 573.20v-5.50M1261.41 573.20v-5.50M1264.24 573.20v-5.50M1269.90 573.20v-5.50M1272.73 573.20v-5.50M1275.56 573.20v-5.50M1278.40 573.20v-5.50M1284.06 573.20v-5.50M1286.89 573.20v-5.50M1289.72 573.20v-5.50M1292.55 573.20v-5.50M1298.21 573.20v-5.50M1301.04 573.20v-5.50M1303.87 573.20v-5.50M1306.70 573.20v-5.50M1312.36 573.20v-5.50M1315.20 573.20v-5.50M1318.03 573.20v-5.50M1320.86 573.20v-5.50M1326.52 573.20v-5.50M1329.35 573.20v-5.50" stroke="#2e2e2e" stroke-width="1.15" fill="none"/>
<path d="M919.30 459.80v-13.50M1008.27 459.80v-13.50M919.30 459.80v13.50M1008.27 459.80v13.50M938.10 431.45v-13.50M1016.33 431.45v-13.50M401.63 374.75v13.50M509.50 318.05v-13.50M539.16 318.05v-13.50M981.30 318.05v-13.50M1010.96 318.05v-13.50M378.64 465.50v7.80M1086.50 465.50v7.80" stroke="#2e2e2e" stroke-width="1" fill="none"/>
<g font-family="Liberation Sans, sans-serif" font-size="14" font-weight="normal" text-anchor="middle">
<text x="304.3" y="258.2" fill="#222" stroke="#222" stroke-width="0.45">1.001</text>
<text x="416.3" y="258.2" fill="#222" stroke="#222" stroke-width="0.45">1.0012</text>
<text x="511.0" y="258.2" fill="#222" stroke="#222" stroke-width="0.45">1.0014</text>
<text x="593.0" y="258.2" fill="#222" stroke="#222" stroke-width="0.45">1.0016</text>
<text x="665.4" y="258.2" fill="#222" stroke="#222" stroke-width="0.45">1.0018</text>
<text x="730.1" y="258.2" fill="#222" stroke="#222" stroke-width="0.45">1.002</text>
<text x="867.1" y="258.2" fill="#222" stroke="#222" stroke-width="0.45">1.0025</text>
<text x="979.0" y="258.2" fill="#222" stroke="#222" stroke-width="0.45">1.0030</text>
<text x="1073.6" y="258.2" fill="#222" stroke="#222" stroke-width="0.45">1.0035</text>
<text x="1155.5" y="258.2" fill="#222" stroke="#222" stroke-width="0.45">1.0040</text>
<text x="1227.8" y="258.2" fill="#222" stroke="#222" stroke-width="0.45">1.0045</text>
<text x="1292.4" y="258.2" fill="#222" stroke="#222" stroke-width="0.45">1.0050</text>
<text x="304.9" y="273.2" fill="#ff2626" stroke="#ff2626" stroke-width="0.45">0.999</text>
<text x="554.3" y="273.2" fill="#ff2626" stroke="#ff2626" stroke-width="0.45">0.9985</text>
<text x="731.3" y="273.2" fill="#ff2626" stroke="#ff2626" stroke-width="0.45">0.998</text>
<text x="980.8" y="273.2" fill="#ff2626" stroke="#ff2626" stroke-width="0.45">0.997</text>
<text x="1158.0" y="273.2" fill="#ff2626" stroke="#ff2626" stroke-width="0.45">0.996</text>
<text x="1295.5" y="273.2" fill="#ff2626" stroke="#ff2626" stroke-width="0.45">0.995</text>
<text x="304.6" y="301.6" fill="#222" stroke="#222" stroke-width="0.45">1</text>
<text x="446.6" y="301.6" fill="#222" stroke="#222" stroke-width="0.45">2</text>
<text x="509.5" y="301.6" fill="#222" stroke="#222" stroke-width="0.3" font-style="italic" font-size="10">e</text>
<text x="529.7" y="301.6" fill="#222" stroke="#222" stroke-width="0.45">3</text>
<text x="539.2" y="301.6" fill="#222" stroke="#222" stroke-width="0.45">π</text>
<text x="588.7" y="301.6" fill="#222" stroke="#222" stroke-width="0.45">4</text>
<text x="634.4" y="301.6" fill="#222" stroke="#222" stroke-width="0.45">5</text>
<text x="671.7" y="301.6" fill="#222" stroke="#222" stroke-width="0.45">6</text>
<text x="703.3" y="301.6" fill="#222" stroke="#222" stroke-width="0.45">7</text>
<text x="730.7" y="301.6" fill="#222" stroke="#222" stroke-width="0.45">8</text>
<text x="754.8" y="301.6" fill="#222" stroke="#222" stroke-width="0.45">9</text>
<text x="776.4" y="301.6" fill="#222" stroke="#222" stroke-width="0.45">10</text>
<text x="918.4" y="301.6" fill="#222" stroke="#222" stroke-width="0.45">2</text>
<text x="981.3" y="301.6" fill="#222" stroke="#222" stroke-width="0.3" font-style="italic" font-size="10">e</text>
<text x="1001.5" y="301.6" fill="#222" stroke="#222" stroke-width="0.45">3</text>
<text x="1011.0" y="301.6" fill="#222" stroke="#222" stroke-width="0.45">π</text>
<text x="1060.5" y="301.6" fill="#222" stroke="#222" stroke-width="0.45">4</text>
<text x="1106.2" y="301.6" fill="#222" stroke="#222" stroke-width="0.45">5</text>
<text x="1143.5" y="301.6" fill="#222" stroke="#222" stroke-width="0.45">6</text>
<text x="1175.1" y="301.6" fill="#222" stroke="#222" stroke-width="0.45">7</text>
<text x="1202.5" y="301.6" fill="#222" stroke="#222" stroke-width="0.45">8</text>
<text x="1226.6" y="301.6" fill="#222" stroke="#222" stroke-width="0.45">9</text>
<text x="1248.2" y="301.6" fill="#222" stroke="#222" stroke-width="0.45">100</text>
<text x="382.8" y="329.9" fill="#222" stroke="#222" stroke-width="0.45">c1</text>
<text x="453.1" y="329.9" fill="#222" stroke="#222" stroke-width="0.45">4</text>
<text x="590.3" y="329.9" fill="#222" stroke="#222" stroke-width="0.45">5</text>
<text x="702.3" y="329.9" fill="#222" stroke="#222" stroke-width="0.45">6</text>
<text x="797.1" y="329.9" fill="#222" stroke="#222" stroke-width="0.45">7</text>
<text x="879.2" y="329.9" fill="#222" stroke="#222" stroke-width="0.45">8</text>
<text x="951.6" y="329.9" fill="#222" stroke="#222" stroke-width="0.45">9</text>
<text x="1016.3" y="329.9" fill="#222" stroke="#222" stroke-width="0.45">1</text>
<text x="1074.9" y="329.9" fill="#222" stroke="#222" stroke-width="0.45">1.1</text>
<text x="1090.4" y="329.9" fill="#222" stroke="#222" stroke-width="0.45">c</text>
<text x="1128.4" y="329.9" fill="#222" stroke="#222" stroke-width="0.45">1.2</text>
<text x="1177.6" y="329.9" fill="#222" stroke="#222" stroke-width="0.45">1.3</text>
<text x="1223.2" y="329.9" fill="#222" stroke="#222" stroke-width="0.45">1.4</text>
<text x="1265.6" y="329.9" fill="#222" stroke="#222" stroke-width="0.45">1.5</text>
<text x="1305.2" y="329.9" fill="#222" stroke="#222" stroke-width="0.45">1.6</text>
<text x="1342.5" y="329.9" fill="#222" stroke="#222" stroke-width="0.45">1.7</text>
<text x="382.8" y="370.6" fill="#222" stroke="#222" stroke-width="0.45">c1</text>
<text x="453.1" y="370.6" fill="#222" stroke="#222" stroke-width="0.45">4</text>
<text x="590.3" y="370.6" fill="#222" stroke="#222" stroke-width="0.45">5</text>
<text x="702.3" y="370.6" fill="#222" stroke="#222" stroke-width="0.45">6</text>
<text x="797.1" y="370.6" fill="#222" stroke="#222" stroke-width="0.45">7</text>
<text x="879.2" y="370.6" fill="#222" stroke="#222" stroke-width="0.45">8</text>
<text x="951.6" y="370.6" fill="#222" stroke="#222" stroke-width="0.45">9</text>
<text x="1016.3" y="370.6" fill="#222" stroke="#222" stroke-width="0.45">1</text>
<text x="1074.9" y="370.6" fill="#222" stroke="#222" stroke-width="0.45">1.1</text>
<text x="1090.4" y="370.6" fill="#222" stroke="#222" stroke-width="0.45">c</text>
<text x="1128.4" y="370.6" fill="#222" stroke="#222" stroke-width="0.45">1.2</text>
<text x="1177.6" y="370.6" fill="#222" stroke="#222" stroke-width="0.45">1.3</text>
<text x="1223.2" y="370.6" fill="#222" stroke="#222" stroke-width="0.45">1.4</text>
<text x="1265.6" y="370.6" fill="#222" stroke="#222" stroke-width="0.45">1.5</text>
<text x="1305.2" y="370.6" fill="#222" stroke="#222" stroke-width="0.45">1.6</text>
<text x="1342.5" y="370.6" fill="#222" stroke="#222" stroke-width="0.45">1.7</text>
<text x="341.0" y="398.9" fill="#ff2626" stroke="#ff2626" stroke-width="0.45">3</text>
<text x="401.6" y="398.9" fill="#ff2626" stroke="#ff2626" stroke-width="0.3" font-style="italic" font-size="10">e</text>
<text x="590.3" y="398.9" fill="#ff2626" stroke="#ff2626" stroke-width="0.45">2</text>
<text x="621.8" y="398.9" fill="#ff2626" stroke="#ff2626" stroke-width="0.45">1.9</text>
<text x="655.0" y="398.9" fill="#ff2626" stroke="#ff2626" stroke-width="0.45">1.8</text>
<text x="690.2" y="398.9" fill="#ff2626" stroke="#ff2626" stroke-width="0.45">1.7</text>
<text x="727.4" y="398.9" fill="#ff2626" stroke="#ff2626" stroke-width="0.45">1.6</text>
<text x="767.1" y="398.9" fill="#ff2626" stroke="#ff2626" stroke-width="0.45">1.5</text>
<text x="809.5" y="398.9" fill="#ff2626" stroke="#ff2626" stroke-width="0.45">1.4</text>
<text x="855.1" y="398.9" fill="#ff2626" stroke="#ff2626" stroke-width="0.45">1.3</text>
<text x="904.3" y="398.9" fill="#ff2626" stroke="#ff2626" stroke-width="0.45">1.2</text>
<text x="957.7" y="398.9" fill="#ff2626" stroke="#ff2626" stroke-width="0.45">1.1</text>
<text x="1016.3" y="398.9" fill="#ff2626" stroke="#ff2626" stroke-width="0.45">1</text>
<text x="1081.1" y="398.9" fill="#ff2626" stroke="#ff2626" stroke-width="0.45">9</text>
<text x="1153.5" y="398.9" fill="#ff2626" stroke="#ff2626" stroke-width="0.45">8</text>
<text x="1235.6" y="398.9" fill="#ff2626" stroke="#ff2626" stroke-width="0.45">7</text>
<text x="369.4" y="415.0" fill="#ff2626" stroke="#ff2626" stroke-width="0.45">9</text>
<text x="441.8" y="415.0" fill="#ff2626" stroke="#ff2626" stroke-width="0.45">8</text>
<text x="523.8" y="415.0" fill="#ff2626" stroke="#ff2626" stroke-width="0.45">7</text>
<text x="618.6" y="415.0" fill="#ff2626" stroke="#ff2626" stroke-width="0.45">6</text>
<text x="730.7" y="415.0" fill="#ff2626" stroke="#ff2626" stroke-width="0.45">5</text>
<text x="867.8" y="415.0" fill="#ff2626" stroke="#ff2626" stroke-width="0.45">4</text>
<text x="939.6" y="415.0" fill="#ff2626" stroke="#ff2626" stroke-width="0.45" font-size="12.5">c<tspan font-size="7" dy="0.5">1</tspan></text>
<text x="1016.3" y="415.0" fill="#ff2626" stroke="#ff2626" stroke-width="0.45">π</text>
<text x="1044.7" y="415.0" fill="#ff2626" stroke="#ff2626" stroke-width="0.45">3</text>
<text x="1105.3" y="415.0" fill="#ff2626" stroke="#ff2626" stroke-width="0.3" font-style="italic" font-size="10">e</text>
<text x="1293.9" y="415.0" fill="#ff2626" stroke="#ff2626" stroke-width="0.45">2</text>
<text x="1325.5" y="415.0" fill="#ff2626" stroke="#ff2626" stroke-width="0.45">1</text>
<text x="304.6" y="443.3" fill="#222" stroke="#222" stroke-width="0.45">1</text>
<text x="363.2" y="443.3" fill="#222" stroke="#222" stroke-width="0.45">1.1</text>
<text x="416.7" y="443.3" fill="#222" stroke="#222" stroke-width="0.45">1.2</text>
<text x="465.9" y="443.3" fill="#222" stroke="#222" stroke-width="0.45">1.3</text>
<text x="511.4" y="443.3" fill="#222" stroke="#222" stroke-width="0.45">1.4</text>
<text x="553.8" y="443.3" fill="#222" stroke="#222" stroke-width="0.45">1.5</text>
<text x="593.5" y="443.3" fill="#222" stroke="#222" stroke-width="0.45">1.6</text>
<text x="630.8" y="443.3" fill="#222" stroke="#222" stroke-width="0.45">1.7</text>
<text x="665.9" y="443.3" fill="#222" stroke="#222" stroke-width="0.45">1.8</text>
<text x="699.1" y="443.3" fill="#222" stroke="#222" stroke-width="0.45">1.9</text>
<text x="730.7" y="443.3" fill="#222" stroke="#222" stroke-width="0.45">2</text>
<text x="919.3" y="443.3" fill="#222" stroke="#222" stroke-width="0.3" font-style="italic" font-size="10">e</text>
<text x="979.9" y="443.3" fill="#222" stroke="#222" stroke-width="0.45">3</text>
<text x="1008.3" y="443.3" fill="#222" stroke="#222" stroke-width="0.45">π</text>
<text x="1156.8" y="443.3" fill="#222" stroke="#222" stroke-width="0.45">4</text>
<text x="1293.9" y="443.3" fill="#222" stroke="#222" stroke-width="0.45">5</text>
<text x="304.6" y="484.0" fill="#222" stroke="#222" stroke-width="0.45">1</text>
<text x="363.2" y="484.0" fill="#222" stroke="#222" stroke-width="0.45">1.1</text>
<text x="416.7" y="484.0" fill="#222" stroke="#222" stroke-width="0.45">1.2</text>
<text x="465.9" y="484.0" fill="#222" stroke="#222" stroke-width="0.45">1.3</text>
<text x="511.4" y="484.0" fill="#222" stroke="#222" stroke-width="0.45">1.4</text>
<text x="553.8" y="484.0" fill="#222" stroke="#222" stroke-width="0.45">1.5</text>
<text x="593.5" y="484.0" fill="#222" stroke="#222" stroke-width="0.45">1.6</text>
<text x="630.8" y="484.0" fill="#222" stroke="#222" stroke-width="0.45">1.7</text>
<text x="665.9" y="484.0" fill="#222" stroke="#222" stroke-width="0.45">1.8</text>
<text x="699.1" y="484.0" fill="#222" stroke="#222" stroke-width="0.45">1.9</text>
<text x="730.7" y="484.0" fill="#222" stroke="#222" stroke-width="0.45">2</text>
<text x="919.3" y="484.0" fill="#222" stroke="#222" stroke-width="0.3" font-style="italic" font-size="10">e</text>
<text x="979.9" y="484.0" fill="#222" stroke="#222" stroke-width="0.45">3</text>
<text x="1008.3" y="484.0" fill="#222" stroke="#222" stroke-width="0.45">π</text>
<text x="1156.8" y="484.0" fill="#222" stroke="#222" stroke-width="0.45">4</text>
<text x="1293.9" y="484.0" fill="#222" stroke="#222" stroke-width="0.45">5</text>
<text x="378.6" y="484.0" fill="#222" stroke="#222" stroke-width="0.45">c</text>
<text x="1088.0" y="484.0" fill="#222" stroke="#222" stroke-width="0.45" font-size="12.5">c<tspan font-size="7" dy="0.5">1</tspan></text>
<text x="304.6" y="512.4" fill="#222" stroke="#222" stroke-width="0.45">1</text>
<text x="421.8" y="512.4" fill="#222" stroke="#222" stroke-width="0.45">1.1</text>
<text x="528.7" y="512.4" fill="#222" stroke="#222" stroke-width="0.45">1.2</text>
<text x="627.2" y="512.4" fill="#222" stroke="#222" stroke-width="0.45">1.3</text>
<text x="718.3" y="512.4" fill="#222" stroke="#222" stroke-width="0.45">1.4</text>
<text x="803.1" y="512.4" fill="#222" stroke="#222" stroke-width="0.45">1.5</text>
<text x="882.4" y="512.4" fill="#222" stroke="#222" stroke-width="0.45">1.6</text>
<text x="957.0" y="512.4" fill="#222" stroke="#222" stroke-width="0.45">1.7</text>
<text x="1027.2" y="512.4" fill="#222" stroke="#222" stroke-width="0.45">1.8</text>
<text x="1093.7" y="512.4" fill="#222" stroke="#222" stroke-width="0.45">1.9</text>
<text x="1156.8" y="512.4" fill="#222" stroke="#222" stroke-width="0.45">2</text>
<text x="429.3" y="540.7" fill="#222" stroke="#222" stroke-width="0.45">3.5</text>
<text x="593.5" y="540.7" fill="#222" stroke="#222" stroke-width="0.45">4</text>
<text x="738.3" y="540.7" fill="#222" stroke="#222" stroke-width="0.45">4.5</text>
<text x="867.8" y="540.7" fill="#222" stroke="#222" stroke-width="0.45">5</text>
<text x="1092.0" y="540.7" fill="#222" stroke="#222" stroke-width="0.45">6</text>
<text x="1281.5" y="540.7" fill="#222" stroke="#222" stroke-width="0.45">7</text>
<text x="304.6" y="556.7" fill="#222" stroke="#222" stroke-width="0.45">0</text>
<text x="446.1" y="556.7" fill="#222" stroke="#222" stroke-width="0.45">1</text>
<text x="587.7" y="556.7" fill="#222" stroke="#222" stroke-width="0.45">2</text>
<text x="729.2" y="556.7" fill="#222" stroke="#222" stroke-width="0.45">3</text>
<text x="870.8" y="556.7" fill="#222" stroke="#222" stroke-width="0.45">4</text>
<text x="1012.3" y="556.7" fill="#222" stroke="#222" stroke-width="0.45">5</text>
<text x="1153.8" y="556.7" fill="#222" stroke="#222" stroke-width="0.45">6</text>
<text x="1295.4" y="556.7" fill="#222" stroke="#222" stroke-width="0.45">7</text>
</g>
<g font-family="Liberation Sans, sans-serif" font-size="13" font-weight="bold" text-anchor="end">
<text x="276" y="254.2" fill="#222">LL0</text>
<text x="219" y="254.2" fill="#222" font-size="13">e<tspan font-size="7.5" dy="-3">x</tspan></text>
<text x="276" y="282.6" fill="#ff2626">LL/0</text>
<text x="219" y="282.6" fill="#ff2626" font-size="13">e<tspan font-size="7.5" dy="-3">−x</tspan></text>
<text x="276" y="310.9" fill="#222">K</text>
<text x="276" y="339.2" fill="#222">DF</text>
<text x="276" y="367.6" fill="#222">CF</text>
<text x="276" y="395.9" fill="#ff2626">CIF</text>
<text x="276" y="424.3" fill="#ff2626">CI</text>
<text x="276" y="452.7" fill="#222">C</text>
<text x="276" y="481.0" fill="#222">D</text>
<text x="276" y="509.3" fill="#222">R1</text>
<text x="276" y="537.7" fill="#222">R2</text>
<text x="276" y="566.1" fill="#222">L</text>
</g>
<path d="M104.60 239.40 H150.70 Q156.70 239.40 156.70 245.40 V560.40 Q156.70 566.40 150.70 566.40 H34.30 Q28.30 566.40 28.30 560.40 V471.40 Q28.30 465.40 34.30 465.40 H78.60 Q98.60 465.40 98.60 445.40 V245.40 Q98.60 239.40 104.60 239.40 Z" fill="#c4c7d0" stroke="#e25555" stroke-width="4.4"/>
<path d="M104.60 238.60 H150.70 Q157.50 238.60 157.50 245.40 V560.40 Q157.50 567.20 150.70 567.20 H34.30 Q27.50 567.20 27.50 560.40 V471.40 Q27.50 464.60 34.30 464.60 H78.60 Q97.80 464.60 97.80 445.40 V245.40 Q97.80 238.60 104.60 238.60 Z" fill="none" stroke="#f09a9a" stroke-width="0.9"/>
<circle cx="127.4" cy="277.4" r="14" fill="#2c5796" stroke="#3d9c8c" stroke-width="1"/>
<line x1="122.3" y1="264.3" x2="132.6" y2="290.5" stroke="#3d9c8c" stroke-width="1"/>
<circle cx="134.5" cy="499.3" r="9.4" fill="#2c5796" stroke="#3d9c8c" stroke-width="1"/>
<circle cx="49.8" cy="546.3" r="9.4" fill="#2c5796" stroke="#3d9c8c" stroke-width="1"/>
<path fill-rule="evenodd" d="M468.60 204.60 H653.40 Q663.40 204.60 663.40 214.60 V590.80 Q663.40 600.80 653.40 600.80 H468.60 Q458.60 600.80 458.60 590.80 V214.60 Q458.60 204.60 468.60 204.60 Z M470.00 238.40 H653.00 Q661.00 238.40 661.00 246.40 V558.90 Q661.00 566.90 653.00 566.90 H470.00 Q462.00 566.90 462.00 558.90 V246.40 Q462.00 238.40 470.00 238.40 Z" fill="#9398a3" stroke="#3e4148" stroke-width="1.6"/>
<rect x="462" y="238.4" width="199" height="328.5" rx="8" fill="#e4e4e2" style="mix-blend-mode:multiply"/>
<line x1="561.2" y1="238.4" x2="561.2" y2="566.9" stroke="#f25a5a" stroke-width="2"/>
<circle cx="483" cy="218" r="8.6" fill="none" stroke="#e6e8ec" stroke-width="1"/>
<line x1="476.0" y1="222.9" x2="490.0" y2="213.1" stroke="#e6e8ec" stroke-width="1"/>
<circle cx="638" cy="218" r="8.6" fill="none" stroke="#e6e8ec" stroke-width="1"/>
<line x1="634.4" y1="225.8" x2="641.6" y2="210.2" stroke="#e6e8ec" stroke-width="1"/>
<circle cx="483" cy="586" r="8.6" fill="none" stroke="#e6e8ec" stroke-width="1"/>
<line x1="474.4" y1="586.7" x2="491.6" y2="585.3" stroke="#e6e8ec" stroke-width="1"/>
<circle cx="638" cy="586" r="8.6" fill="none" stroke="#e6e8ec" stroke-width="1"/>
<line x1="629.4" y1="586.0" x2="646.6" y2="586.0" stroke="#e6e8ec" stroke-width="1"/>
</svg>
</body></html>
